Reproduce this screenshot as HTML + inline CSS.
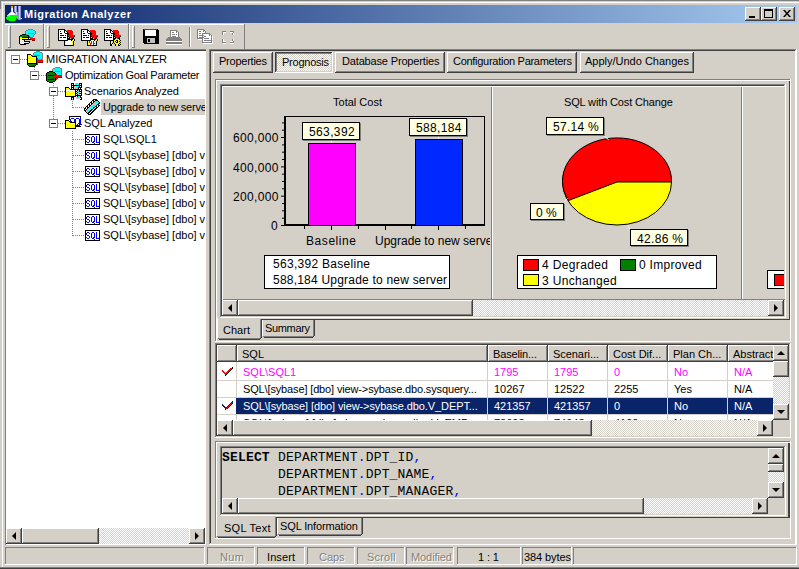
<!DOCTYPE html><html><head><meta charset="utf-8"><style>
*{box-sizing:border-box;margin:0;padding:0}
html,body{width:799px;height:569px;overflow:hidden;background:#d4d0c8;font-family:"Liberation Sans",sans-serif;font-size:11px;color:#000;position:relative}
.a{position:absolute}
.raised{box-shadow:inset -1px -1px #404040,inset 1px 1px #fff,inset -2px -2px #808080,inset 2px 2px #d4d0c8;background:#d4d0c8}
.sunk{box-shadow:inset -1px -1px #fff,inset 1px 1px #808080,inset -2px -2px #d4d0c8,inset 2px 2px #404040}
.tsunk{box-shadow:inset -1px -1px #fff,inset 1px 1px #808080}
.traised{box-shadow:inset -1px -1px #808080,inset 1px 1px #fff}
.etch{box-shadow:inset 1px 1px #808080,inset 2px 2px #fff,inset -1px -1px #fff,inset -2px -2px #808080}
.dither{background-color:#fff;background-image:linear-gradient(45deg,#d4d0c8 25%,transparent 25%,transparent 75%,#d4d0c8 75%),linear-gradient(45deg,#d4d0c8 25%,transparent 25%,transparent 75%,#d4d0c8 75%);background-size:2px 2px;background-position:0 0,1px 1px}
.t{position:absolute;white-space:nowrap;line-height:13px}
.t12{position:absolute;white-space:nowrap;line-height:14px;font-size:12px}
.dis{color:#808080;text-shadow:1px 1px #fff}
</style></head><body><div class="a " style="left:0px;top:0px;width:799px;height:1px;background:#808080"></div>
<div class="a " style="left:0px;top:0px;width:1px;height:9px;background:#808080"></div>
<div class="a " style="left:2px;top:2px;width:797px;height:1px;background:#fff"></div>
<div class="a " style="left:2px;top:2px;width:1px;height:565px;background:#fff"></div>
<div class="a " style="left:0px;top:567px;width:799px;height:1px;background:#808080"></div>
<div class="a " style="left:0px;top:568px;width:799px;height:1px;background:#404040"></div>
<div class="a " style="left:5px;top:5px;width:792px;height:18px;background:linear-gradient(to right,#0a246a,#a6caf0)"></div>
<svg class="a" style="left:6px;top:6px" width="16" height="16" shape-rendering="crispEdges"><rect x="5" y="0" width="2" height="1" fill="#ff9900"/><rect x="8" y="0" width="1" height="1" fill="#8890d0"/><rect x="9" y="0" width="1" height="1" fill="#c8d0f8"/><rect x="10" y="0" width="1" height="1" fill="#8890d0"/><rect x="12" y="0" width="1" height="1" fill="#8890d0"/><rect x="13" y="0" width="1" height="1" fill="#c8d0f8"/><rect x="14" y="0" width="1" height="1" fill="#8890d0"/><rect x="5" y="1" width="2" height="1" fill="#ff9900"/><rect x="8" y="1" width="1" height="1" fill="#8890d0"/><rect x="9" y="1" width="1" height="1" fill="#c8d0f8"/><rect x="10" y="1" width="1" height="1" fill="#8890d0"/><rect x="12" y="1" width="1" height="1" fill="#8890d0"/><rect x="13" y="1" width="1" height="1" fill="#c8d0f8"/><rect x="14" y="1" width="1" height="1" fill="#8890d0"/><rect x="5" y="2" width="1" height="1" fill="#c8d0f8"/><rect x="6" y="2" width="1" height="1" fill="#ffffff"/><rect x="8" y="2" width="1" height="1" fill="#8890d0"/><rect x="9" y="2" width="1" height="1" fill="#c8d0f8"/><rect x="10" y="2" width="1" height="1" fill="#8890d0"/><rect x="12" y="2" width="1" height="1" fill="#8890d0"/><rect x="13" y="2" width="1" height="1" fill="#c8d0f8"/><rect x="14" y="2" width="1" height="1" fill="#8890d0"/><rect x="5" y="3" width="1" height="1" fill="#c8d0f8"/><rect x="6" y="3" width="1" height="1" fill="#ffffff"/><rect x="8" y="3" width="1" height="1" fill="#8890d0"/><rect x="9" y="3" width="1" height="1" fill="#c8d0f8"/><rect x="10" y="3" width="1" height="1" fill="#8890d0"/><rect x="12" y="3" width="1" height="1" fill="#8890d0"/><rect x="13" y="3" width="1" height="1" fill="#c8d0f8"/><rect x="14" y="3" width="1" height="1" fill="#8890d0"/><rect x="5" y="4" width="1" height="1" fill="#c8d0f8"/><rect x="6" y="4" width="1" height="1" fill="#ffffff"/><rect x="8" y="4" width="1" height="1" fill="#8890d0"/><rect x="9" y="4" width="1" height="1" fill="#c8d0f8"/><rect x="10" y="4" width="1" height="1" fill="#8890d0"/><rect x="12" y="4" width="1" height="1" fill="#8890d0"/><rect x="13" y="4" width="1" height="1" fill="#c8d0f8"/><rect x="14" y="4" width="1" height="1" fill="#8890d0"/><rect x="5" y="5" width="1" height="1" fill="#c8d0f8"/><rect x="6" y="5" width="1" height="1" fill="#ffffff"/><rect x="8" y="5" width="1" height="1" fill="#8890d0"/><rect x="9" y="5" width="1" height="1" fill="#c8d0f8"/><rect x="10" y="5" width="1" height="1" fill="#8890d0"/><rect x="12" y="5" width="1" height="1" fill="#8890d0"/><rect x="13" y="5" width="1" height="1" fill="#c8d0f8"/><rect x="14" y="5" width="1" height="1" fill="#8890d0"/><rect x="4" y="6" width="1" height="1" fill="#c8d0f8"/><rect x="5" y="6" width="2" height="1" fill="#ffffff"/><rect x="7" y="6" width="1" height="1" fill="#c8d0f8"/><rect x="9" y="6" width="1" height="1" fill="#8890d0"/><rect x="10" y="6" width="1" height="1" fill="#c8d0f8"/><rect x="11" y="6" width="2" height="1" fill="#8890d0"/><rect x="13" y="6" width="1" height="1" fill="#c8d0f8"/><rect x="14" y="6" width="1" height="1" fill="#8890d0"/><rect x="3" y="7" width="1" height="1" fill="#c8d0f8"/><rect x="4" y="7" width="4" height="1" fill="#ffffff"/><rect x="8" y="7" width="1" height="1" fill="#c8d0f8"/><rect x="9" y="7" width="1" height="1" fill="#8890d0"/><rect x="10" y="7" width="1" height="1" fill="#c8d0f8"/><rect x="11" y="7" width="2" height="1" fill="#8890d0"/><rect x="13" y="7" width="1" height="1" fill="#c8d0f8"/><rect x="14" y="7" width="1" height="1" fill="#8890d0"/><rect x="2" y="8" width="1" height="1" fill="#c8d0f8"/><rect x="3" y="8" width="6" height="1" fill="#ffffff"/><rect x="9" y="8" width="2" height="1" fill="#c8d0f8"/><rect x="11" y="8" width="2" height="1" fill="#8890d0"/><rect x="13" y="8" width="1" height="1" fill="#c8d0f8"/><rect x="14" y="8" width="1" height="1" fill="#8890d0"/><rect x="1" y="9" width="1" height="1" fill="#c8d0f8"/><rect x="2" y="9" width="2" height="1" fill="#80ff80"/><rect x="4" y="9" width="6" height="1" fill="#00ff00"/><rect x="10" y="9" width="3" height="1" fill="#8890d0"/><rect x="13" y="9" width="1" height="1" fill="#c8d0f8"/><rect x="14" y="9" width="1" height="1" fill="#8890d0"/><rect x="1" y="10" width="2" height="1" fill="#00ff00"/><rect x="3" y="10" width="1" height="1" fill="#80ff80"/><rect x="4" y="10" width="7" height="1" fill="#00ff00"/><rect x="11" y="10" width="2" height="1" fill="#8890d0"/><rect x="13" y="10" width="1" height="1" fill="#c8d0f8"/><rect x="14" y="10" width="1" height="1" fill="#8890d0"/><rect x="0" y="11" width="11" height="1" fill="#00ff00"/><rect x="11" y="11" width="2" height="1" fill="#8890d0"/><rect x="13" y="11" width="1" height="1" fill="#c8d0f8"/><rect x="14" y="11" width="1" height="1" fill="#8890d0"/><rect x="0" y="12" width="10" height="1" fill="#00ff00"/><rect x="10" y="12" width="1" height="1" fill="#008000"/><rect x="11" y="12" width="2" height="1" fill="#8890d0"/><rect x="13" y="12" width="1" height="1" fill="#c8d0f8"/><rect x="14" y="12" width="1" height="1" fill="#8890d0"/><rect x="15" y="12" width="1" height="1" fill="#ffffff"/><rect x="1" y="13" width="9" height="1" fill="#00ff00"/><rect x="10" y="13" width="1" height="1" fill="#008000"/><rect x="12" y="13" width="3" height="1" fill="#8890d0"/><rect x="2" y="14" width="1" height="1" fill="#008000"/><rect x="3" y="14" width="6" height="1" fill="#00ff00"/><rect x="9" y="14" width="1" height="1" fill="#008000"/><rect x="4" y="15" width="4" height="1" fill="#008000"/></svg>
<div class="t" style="left:24px;top:8px;color:#fff;letter-spacing:0.528px;font-weight:bold">Migration Analyzer</div>
<div class="a raised" style="left:745px;top:7px;width:16px;height:14px;"></div>
<div class="a " style="left:749px;top:16px;width:6px;height:2px;background:#000"></div>
<div class="a raised" style="left:761px;top:7px;width:16px;height:14px;"></div>
<div class="a " style="left:764px;top:9px;width:9px;height:9px;border:1px solid #000;border-top-width:2px"></div>
<div class="a raised" style="left:779px;top:7px;width:16px;height:14px;"></div>
<svg class="a" style="left:783px;top:10px" width="8" height="7"><path d="M0 0h2l2 2.5 2-2.5h2l-3 3.5 3 3.5h-2l-2-2.5-2 2.5h-2l3-3.5z" fill="#000"/></svg>
<div class="a " style="left:5px;top:24px;width:239px;height:1px;background:#fff"></div>
<div class="a " style="left:43px;top:24px;width:1px;height:25px;background:#808080"></div>
<div class="a " style="left:44px;top:24px;width:1px;height:25px;background:#fff"></div>
<div class="a " style="left:128px;top:24px;width:1px;height:25px;background:#808080"></div>
<div class="a " style="left:129px;top:24px;width:1px;height:25px;background:#fff"></div>
<div class="a " style="left:244px;top:24px;width:1px;height:25px;background:#808080"></div>
<div class="a traised" style="left:8px;top:26px;width:3px;height:22px;"></div>
<div class="a traised" style="left:47px;top:26px;width:3px;height:22px;"></div>
<div class="a traised" style="left:132px;top:26px;width:3px;height:22px;"></div>
<div class="a " style="left:189px;top:27px;width:1px;height:20px;background:#808080"></div>
<div class="a " style="left:190px;top:27px;width:1px;height:20px;background:#fff"></div>
<svg class="a" style="left:17px;top:27px" width="20" height="20" shape-rendering="crispEdges"><rect x="11" y="2" width="5" height="1" fill="#808080"/><rect x="9" y="3" width="2" height="1" fill="#808080"/><rect x="11" y="3" width="5" height="1" fill="#00ffff"/><rect x="16" y="3" width="2" height="1" fill="#808080"/><rect x="8" y="4" width="1" height="1" fill="#808080"/><rect x="9" y="4" width="9" height="1" fill="#00ffff"/><rect x="18" y="4" width="1" height="1" fill="#808080"/><rect x="8" y="5" width="1" height="1" fill="#808080"/><rect x="9" y="5" width="9" height="1" fill="#00ffff"/><rect x="18" y="5" width="1" height="1" fill="#808080"/><rect x="8" y="6" width="1" height="1" fill="#808080"/><rect x="9" y="6" width="2" height="1" fill="#00ffff"/><rect x="11" y="6" width="6" height="1" fill="#808080"/><rect x="17" y="6" width="1" height="1" fill="#00ffff"/><rect x="18" y="6" width="1" height="1" fill="#808080"/><rect x="5" y="7" width="4" height="1" fill="#000000"/><rect x="9" y="7" width="1" height="1" fill="#808080"/><rect x="10" y="7" width="7" height="1" fill="#00ffff"/><rect x="17" y="7" width="1" height="1" fill="#808080"/><rect x="3" y="8" width="2" height="1" fill="#000000"/><rect x="5" y="8" width="5" height="1" fill="#008000"/><rect x="10" y="8" width="2" height="1" fill="#000000"/><rect x="12" y="8" width="4" height="1" fill="#00ffff"/><rect x="16" y="8" width="1" height="1" fill="#808080"/><rect x="2" y="9" width="1" height="1" fill="#000000"/><rect x="3" y="9" width="8" height="1" fill="#008000"/><rect x="11" y="9" width="1" height="1" fill="#000000"/><rect x="12" y="9" width="1" height="1" fill="#ff0000"/><rect x="13" y="9" width="3" height="1" fill="#00ffff"/><rect x="16" y="9" width="1" height="1" fill="#808080"/><rect x="2" y="10" width="1" height="1" fill="#000000"/><rect x="3" y="10" width="2" height="1" fill="#ffff00"/><rect x="5" y="10" width="7" height="1" fill="#000000"/><rect x="12" y="10" width="2" height="1" fill="#ff0000"/><rect x="14" y="10" width="2" height="1" fill="#808080"/><rect x="2" y="11" width="1" height="1" fill="#000000"/><rect x="3" y="11" width="1" height="1" fill="#ffff00"/><rect x="4" y="11" width="1" height="1" fill="#ffffff"/><rect x="5" y="11" width="1" height="1" fill="#ffff00"/><rect x="6" y="11" width="1" height="1" fill="#ffffff"/><rect x="7" y="11" width="1" height="1" fill="#ffff00"/><rect x="8" y="11" width="1" height="1" fill="#ffffff"/><rect x="9" y="11" width="1" height="1" fill="#ffff00"/><rect x="10" y="11" width="1" height="1" fill="#ffffff"/><rect x="11" y="11" width="1" height="1" fill="#000000"/><rect x="12" y="11" width="1" height="1" fill="#ffffff"/><rect x="13" y="11" width="5" height="1" fill="#ff0000"/><rect x="2" y="12" width="1" height="1" fill="#000000"/><rect x="3" y="12" width="2" height="1" fill="#ffff00"/><rect x="5" y="12" width="9" height="1" fill="#000000"/><rect x="14" y="12" width="4" height="1" fill="#ff0000"/><rect x="2" y="13" width="1" height="1" fill="#000000"/><rect x="3" y="13" width="1" height="1" fill="#ffffff"/><rect x="4" y="13" width="1" height="1" fill="#ffff00"/><rect x="5" y="13" width="1" height="1" fill="#ffffff"/><rect x="6" y="13" width="1" height="1" fill="#ffff00"/><rect x="7" y="13" width="1" height="1" fill="#000000"/><rect x="15" y="13" width="3" height="1" fill="#800000"/><rect x="2" y="14" width="1" height="1" fill="#000000"/><rect x="3" y="14" width="1" height="1" fill="#ffff00"/><rect x="4" y="14" width="1" height="1" fill="#ffffff"/><rect x="5" y="14" width="1" height="1" fill="#ffff00"/><rect x="6" y="14" width="1" height="1" fill="#ffffff"/><rect x="7" y="14" width="6" height="1" fill="#000000"/><rect x="2" y="15" width="1" height="1" fill="#000000"/><rect x="3" y="15" width="1" height="1" fill="#ffffff"/><rect x="4" y="15" width="1" height="1" fill="#ffff00"/><rect x="5" y="15" width="1" height="1" fill="#ffffff"/><rect x="6" y="15" width="1" height="1" fill="#ffff00"/><rect x="7" y="15" width="1" height="1" fill="#ffffff"/><rect x="8" y="15" width="1" height="1" fill="#ffff00"/><rect x="9" y="15" width="1" height="1" fill="#ffffff"/><rect x="10" y="15" width="1" height="1" fill="#ffff00"/><rect x="11" y="15" width="1" height="1" fill="#ffffff"/><rect x="12" y="15" width="1" height="1" fill="#000000"/><rect x="2" y="16" width="1" height="1" fill="#000000"/><rect x="3" y="16" width="1" height="1" fill="#ffff00"/><rect x="4" y="16" width="1" height="1" fill="#ffffff"/><rect x="5" y="16" width="1" height="1" fill="#ffff00"/><rect x="6" y="16" width="1" height="1" fill="#ffffff"/><rect x="7" y="16" width="5" height="1" fill="#000000"/><rect x="3" y="17" width="6" height="1" fill="#000000"/></svg>
<svg class="a" style="left:56px;top:27px" width="20" height="20" shape-rendering="crispEdges"><rect x="2" y="2" width="7" height="1" fill="#000000"/><rect x="2" y="3" width="1" height="1" fill="#000000"/><rect x="3" y="3" width="5" height="1" fill="#ffffff"/><rect x="8" y="3" width="2" height="1" fill="#000000"/><rect x="11" y="3" width="5" height="1" fill="#ff0000"/><rect x="2" y="4" width="1" height="1" fill="#000000"/><rect x="3" y="4" width="1" height="1" fill="#ffffff"/><rect x="4" y="4" width="1" height="1" fill="#000000"/><rect x="5" y="4" width="3" height="1" fill="#ffffff"/><rect x="8" y="4" width="1" height="1" fill="#000000"/><rect x="9" y="4" width="1" height="1" fill="#ffffff"/><rect x="10" y="4" width="1" height="1" fill="#000000"/><rect x="11" y="4" width="6" height="1" fill="#ff0000"/><rect x="2" y="5" width="1" height="1" fill="#000000"/><rect x="3" y="5" width="5" height="1" fill="#ffffff"/><rect x="8" y="5" width="1" height="1" fill="#000000"/><rect x="9" y="5" width="2" height="1" fill="#ffffff"/><rect x="11" y="5" width="1" height="1" fill="#000000"/><rect x="12" y="5" width="5" height="1" fill="#ff0000"/><rect x="2" y="6" width="1" height="1" fill="#000000"/><rect x="3" y="6" width="1" height="1" fill="#ffffff"/><rect x="4" y="6" width="2" height="1" fill="#000000"/><rect x="6" y="6" width="3" height="1" fill="#ffffff"/><rect x="9" y="6" width="4" height="1" fill="#000000"/><rect x="13" y="6" width="4" height="1" fill="#ff0000"/><rect x="2" y="7" width="1" height="1" fill="#000000"/><rect x="3" y="7" width="8" height="1" fill="#ffffff"/><rect x="11" y="7" width="2" height="1" fill="#000000"/><rect x="13" y="7" width="4" height="1" fill="#ff0000"/><rect x="2" y="8" width="1" height="1" fill="#000000"/><rect x="3" y="8" width="1" height="1" fill="#ffffff"/><rect x="4" y="8" width="4" height="1" fill="#000000"/><rect x="8" y="8" width="1" height="1" fill="#ffffff"/><rect x="9" y="8" width="1" height="1" fill="#000000"/><rect x="10" y="8" width="1" height="1" fill="#ffffff"/><rect x="11" y="8" width="1" height="1" fill="#000000"/><rect x="12" y="8" width="7" height="1" fill="#ff0000"/><rect x="2" y="9" width="1" height="1" fill="#000000"/><rect x="3" y="9" width="8" height="1" fill="#ffffff"/><rect x="11" y="9" width="2" height="1" fill="#000000"/><rect x="13" y="9" width="5" height="1" fill="#ff0000"/><rect x="18" y="9" width="1" height="1" fill="#000000"/><rect x="2" y="10" width="1" height="1" fill="#000000"/><rect x="3" y="10" width="1" height="1" fill="#ffffff"/><rect x="4" y="10" width="2" height="1" fill="#000000"/><rect x="6" y="10" width="1" height="1" fill="#ffffff"/><rect x="7" y="10" width="3" height="1" fill="#000000"/><rect x="10" y="10" width="1" height="1" fill="#ffffff"/><rect x="11" y="10" width="1" height="1" fill="#000000"/><rect x="13" y="10" width="1" height="1" fill="#000000"/><rect x="14" y="10" width="3" height="1" fill="#ff0000"/><rect x="17" y="10" width="1" height="1" fill="#000000"/><rect x="2" y="11" width="1" height="1" fill="#000000"/><rect x="3" y="11" width="8" height="1" fill="#ffffff"/><rect x="11" y="11" width="3" height="1" fill="#000000"/><rect x="15" y="11" width="1" height="1" fill="#ff0000"/><rect x="16" y="11" width="2" height="1" fill="#000000"/><rect x="2" y="12" width="1" height="1" fill="#000000"/><rect x="3" y="12" width="8" height="1" fill="#ffffff"/><rect x="11" y="12" width="6" height="1" fill="#000000"/><rect x="17" y="12" width="1" height="1" fill="#ffff00"/><rect x="18" y="12" width="1" height="1" fill="#000000"/><rect x="2" y="13" width="10" height="1" fill="#000000"/><rect x="12" y="13" width="3" height="1" fill="#ffffff"/><rect x="15" y="13" width="1" height="1" fill="#000000"/><rect x="16" y="13" width="2" height="1" fill="#ffff00"/><rect x="18" y="13" width="1" height="1" fill="#000000"/><rect x="8" y="14" width="1" height="1" fill="#000000"/><rect x="9" y="14" width="1" height="1" fill="#ffff00"/><rect x="10" y="14" width="6" height="1" fill="#ffffff"/><rect x="16" y="14" width="1" height="1" fill="#ffff00"/><rect x="17" y="14" width="1" height="1" fill="#000000"/><rect x="8" y="15" width="1" height="1" fill="#000000"/><rect x="9" y="15" width="1" height="1" fill="#ffff00"/><rect x="10" y="15" width="6" height="1" fill="#ffffff"/><rect x="16" y="15" width="1" height="1" fill="#ffff00"/><rect x="17" y="15" width="1" height="1" fill="#000000"/><rect x="8" y="16" width="1" height="1" fill="#000000"/><rect x="9" y="16" width="1" height="1" fill="#ffff00"/><rect x="10" y="16" width="6" height="1" fill="#ffffff"/><rect x="16" y="16" width="1" height="1" fill="#ffff00"/><rect x="17" y="16" width="1" height="1" fill="#000000"/><rect x="8" y="17" width="1" height="1" fill="#000000"/><rect x="9" y="17" width="1" height="1" fill="#ffff00"/><rect x="10" y="17" width="6" height="1" fill="#ffffff"/><rect x="16" y="17" width="1" height="1" fill="#ffff00"/><rect x="17" y="17" width="1" height="1" fill="#000000"/><rect x="8" y="18" width="10" height="1" fill="#000000"/></svg>
<svg class="a" style="left:79px;top:27px" width="20" height="20" shape-rendering="crispEdges"><rect x="2" y="2" width="7" height="1" fill="#000000"/><rect x="2" y="3" width="1" height="1" fill="#000000"/><rect x="3" y="3" width="5" height="1" fill="#ffffff"/><rect x="8" y="3" width="2" height="1" fill="#000000"/><rect x="11" y="3" width="5" height="1" fill="#ff0000"/><rect x="2" y="4" width="1" height="1" fill="#000000"/><rect x="3" y="4" width="1" height="1" fill="#ffffff"/><rect x="4" y="4" width="1" height="1" fill="#000000"/><rect x="5" y="4" width="3" height="1" fill="#ffffff"/><rect x="8" y="4" width="1" height="1" fill="#000000"/><rect x="9" y="4" width="1" height="1" fill="#ffffff"/><rect x="10" y="4" width="1" height="1" fill="#000000"/><rect x="11" y="4" width="6" height="1" fill="#ff0000"/><rect x="2" y="5" width="1" height="1" fill="#000000"/><rect x="3" y="5" width="5" height="1" fill="#ffffff"/><rect x="8" y="5" width="1" height="1" fill="#000000"/><rect x="9" y="5" width="2" height="1" fill="#ffffff"/><rect x="11" y="5" width="1" height="1" fill="#000000"/><rect x="12" y="5" width="5" height="1" fill="#ff0000"/><rect x="2" y="6" width="1" height="1" fill="#000000"/><rect x="3" y="6" width="1" height="1" fill="#ffffff"/><rect x="4" y="6" width="2" height="1" fill="#000000"/><rect x="6" y="6" width="3" height="1" fill="#ffffff"/><rect x="9" y="6" width="4" height="1" fill="#000000"/><rect x="13" y="6" width="4" height="1" fill="#ff0000"/><rect x="2" y="7" width="1" height="1" fill="#000000"/><rect x="3" y="7" width="8" height="1" fill="#ffffff"/><rect x="11" y="7" width="2" height="1" fill="#000000"/><rect x="13" y="7" width="4" height="1" fill="#ff0000"/><rect x="2" y="8" width="1" height="1" fill="#000000"/><rect x="3" y="8" width="1" height="1" fill="#ffffff"/><rect x="4" y="8" width="4" height="1" fill="#000000"/><rect x="8" y="8" width="1" height="1" fill="#ffffff"/><rect x="9" y="8" width="1" height="1" fill="#000000"/><rect x="10" y="8" width="1" height="1" fill="#ffffff"/><rect x="11" y="8" width="1" height="1" fill="#000000"/><rect x="12" y="8" width="7" height="1" fill="#ff0000"/><rect x="2" y="9" width="1" height="1" fill="#000000"/><rect x="3" y="9" width="8" height="1" fill="#ffffff"/><rect x="11" y="9" width="2" height="1" fill="#000000"/><rect x="13" y="9" width="5" height="1" fill="#ff0000"/><rect x="18" y="9" width="1" height="1" fill="#000000"/><rect x="2" y="10" width="1" height="1" fill="#000000"/><rect x="3" y="10" width="1" height="1" fill="#ffffff"/><rect x="4" y="10" width="2" height="1" fill="#000000"/><rect x="6" y="10" width="1" height="1" fill="#ffffff"/><rect x="7" y="10" width="3" height="1" fill="#000000"/><rect x="10" y="10" width="1" height="1" fill="#ffffff"/><rect x="11" y="10" width="1" height="1" fill="#000000"/><rect x="13" y="10" width="1" height="1" fill="#000000"/><rect x="14" y="10" width="3" height="1" fill="#ff0000"/><rect x="17" y="10" width="1" height="1" fill="#000000"/><rect x="2" y="11" width="1" height="1" fill="#000000"/><rect x="3" y="11" width="8" height="1" fill="#ffffff"/><rect x="11" y="11" width="3" height="1" fill="#000000"/><rect x="15" y="11" width="1" height="1" fill="#ff0000"/><rect x="16" y="11" width="2" height="1" fill="#000000"/><rect x="2" y="12" width="1" height="1" fill="#000000"/><rect x="3" y="12" width="8" height="1" fill="#ffffff"/><rect x="11" y="12" width="6" height="1" fill="#000000"/><rect x="17" y="12" width="1" height="1" fill="#ffff00"/><rect x="18" y="12" width="1" height="1" fill="#000000"/><rect x="2" y="13" width="10" height="1" fill="#000000"/><rect x="12" y="13" width="3" height="1" fill="#ffffff"/><rect x="15" y="13" width="1" height="1" fill="#000000"/><rect x="16" y="13" width="2" height="1" fill="#ffff00"/><rect x="18" y="13" width="1" height="1" fill="#000000"/><rect x="8" y="14" width="1" height="1" fill="#000000"/><rect x="9" y="14" width="1" height="1" fill="#ffff00"/><rect x="10" y="14" width="1" height="1" fill="#ff0000"/><rect x="11" y="14" width="1" height="1" fill="#ffffff"/><rect x="12" y="14" width="1" height="1" fill="#ff0000"/><rect x="13" y="14" width="1" height="1" fill="#ffffff"/><rect x="14" y="14" width="1" height="1" fill="#ff0000"/><rect x="15" y="14" width="1" height="1" fill="#ffffff"/><rect x="16" y="14" width="1" height="1" fill="#ffff00"/><rect x="17" y="14" width="1" height="1" fill="#000000"/><rect x="8" y="15" width="1" height="1" fill="#000000"/><rect x="9" y="15" width="1" height="1" fill="#ffff00"/><rect x="10" y="15" width="1" height="1" fill="#ff0000"/><rect x="11" y="15" width="1" height="1" fill="#ffffff"/><rect x="12" y="15" width="1" height="1" fill="#ff0000"/><rect x="13" y="15" width="1" height="1" fill="#ffffff"/><rect x="14" y="15" width="1" height="1" fill="#ff0000"/><rect x="15" y="15" width="1" height="1" fill="#ffffff"/><rect x="16" y="15" width="1" height="1" fill="#ffff00"/><rect x="17" y="15" width="1" height="1" fill="#000000"/><rect x="8" y="16" width="1" height="1" fill="#000000"/><rect x="9" y="16" width="1" height="1" fill="#ffff00"/><rect x="10" y="16" width="1" height="1" fill="#ffffff"/><rect x="11" y="16" width="2" height="1" fill="#ff0000"/><rect x="13" y="16" width="1" height="1" fill="#ffffff"/><rect x="14" y="16" width="2" height="1" fill="#ff0000"/><rect x="16" y="16" width="1" height="1" fill="#ffff00"/><rect x="17" y="16" width="1" height="1" fill="#000000"/><rect x="8" y="17" width="1" height="1" fill="#000000"/><rect x="9" y="17" width="1" height="1" fill="#ffff00"/><rect x="10" y="17" width="1" height="1" fill="#ffffff"/><rect x="11" y="17" width="1" height="1" fill="#ff0000"/><rect x="12" y="17" width="2" height="1" fill="#ffffff"/><rect x="14" y="17" width="1" height="1" fill="#ff0000"/><rect x="15" y="17" width="1" height="1" fill="#ffffff"/><rect x="16" y="17" width="1" height="1" fill="#ffff00"/><rect x="17" y="17" width="1" height="1" fill="#000000"/><rect x="8" y="18" width="10" height="1" fill="#000000"/></svg>
<svg class="a" style="left:102px;top:27px" width="20" height="20" shape-rendering="crispEdges"><rect x="2" y="2" width="7" height="1" fill="#000000"/><rect x="2" y="3" width="1" height="1" fill="#000000"/><rect x="3" y="3" width="5" height="1" fill="#ffffff"/><rect x="8" y="3" width="2" height="1" fill="#000000"/><rect x="11" y="3" width="5" height="1" fill="#ff0000"/><rect x="2" y="4" width="1" height="1" fill="#000000"/><rect x="3" y="4" width="1" height="1" fill="#ffffff"/><rect x="4" y="4" width="1" height="1" fill="#000000"/><rect x="5" y="4" width="3" height="1" fill="#ffffff"/><rect x="8" y="4" width="1" height="1" fill="#000000"/><rect x="9" y="4" width="1" height="1" fill="#ffffff"/><rect x="10" y="4" width="1" height="1" fill="#000000"/><rect x="11" y="4" width="6" height="1" fill="#ff0000"/><rect x="2" y="5" width="1" height="1" fill="#000000"/><rect x="3" y="5" width="5" height="1" fill="#ffffff"/><rect x="8" y="5" width="1" height="1" fill="#000000"/><rect x="9" y="5" width="2" height="1" fill="#ffffff"/><rect x="11" y="5" width="1" height="1" fill="#000000"/><rect x="12" y="5" width="5" height="1" fill="#ff0000"/><rect x="2" y="6" width="1" height="1" fill="#000000"/><rect x="3" y="6" width="1" height="1" fill="#ffffff"/><rect x="4" y="6" width="2" height="1" fill="#000000"/><rect x="6" y="6" width="3" height="1" fill="#ffffff"/><rect x="9" y="6" width="4" height="1" fill="#000000"/><rect x="13" y="6" width="4" height="1" fill="#ff0000"/><rect x="2" y="7" width="1" height="1" fill="#000000"/><rect x="3" y="7" width="8" height="1" fill="#ffffff"/><rect x="11" y="7" width="2" height="1" fill="#000000"/><rect x="13" y="7" width="4" height="1" fill="#ff0000"/><rect x="2" y="8" width="1" height="1" fill="#000000"/><rect x="3" y="8" width="1" height="1" fill="#ffffff"/><rect x="4" y="8" width="4" height="1" fill="#000000"/><rect x="8" y="8" width="1" height="1" fill="#ffffff"/><rect x="9" y="8" width="1" height="1" fill="#000000"/><rect x="10" y="8" width="1" height="1" fill="#ffffff"/><rect x="11" y="8" width="1" height="1" fill="#000000"/><rect x="12" y="8" width="7" height="1" fill="#ff0000"/><rect x="2" y="9" width="1" height="1" fill="#000000"/><rect x="3" y="9" width="8" height="1" fill="#ffffff"/><rect x="11" y="9" width="2" height="1" fill="#000000"/><rect x="13" y="9" width="5" height="1" fill="#ff0000"/><rect x="18" y="9" width="1" height="1" fill="#000000"/><rect x="2" y="10" width="1" height="1" fill="#000000"/><rect x="3" y="10" width="1" height="1" fill="#ffffff"/><rect x="4" y="10" width="2" height="1" fill="#000000"/><rect x="6" y="10" width="1" height="1" fill="#ffffff"/><rect x="7" y="10" width="3" height="1" fill="#000000"/><rect x="10" y="10" width="1" height="1" fill="#ffffff"/><rect x="11" y="10" width="1" height="1" fill="#000000"/><rect x="13" y="10" width="1" height="1" fill="#000000"/><rect x="14" y="10" width="3" height="1" fill="#ff0000"/><rect x="17" y="10" width="1" height="1" fill="#000000"/><rect x="2" y="11" width="1" height="1" fill="#000000"/><rect x="3" y="11" width="8" height="1" fill="#ffffff"/><rect x="11" y="11" width="3" height="1" fill="#000000"/><rect x="15" y="11" width="1" height="1" fill="#ff0000"/><rect x="16" y="11" width="2" height="1" fill="#000000"/><rect x="2" y="12" width="1" height="1" fill="#000000"/><rect x="3" y="12" width="8" height="1" fill="#ffffff"/><rect x="11" y="12" width="2" height="1" fill="#000000"/><rect x="13" y="12" width="4" height="1" fill="#ffff00"/><rect x="17" y="12" width="1" height="1" fill="#000000"/><rect x="2" y="13" width="10" height="1" fill="#000000"/><rect x="12" y="13" width="2" height="1" fill="#ffff00"/><rect x="14" y="13" width="2" height="1" fill="#000000"/><rect x="16" y="13" width="2" height="1" fill="#ffff00"/><rect x="18" y="13" width="1" height="1" fill="#000000"/><rect x="8" y="14" width="1" height="1" fill="#000000"/><rect x="11" y="14" width="1" height="1" fill="#000000"/><rect x="12" y="14" width="1" height="1" fill="#ffff00"/><rect x="13" y="14" width="1" height="1" fill="#000000"/><rect x="14" y="14" width="1" height="1" fill="#ffffff"/><rect x="15" y="14" width="1" height="1" fill="#000000"/><rect x="16" y="14" width="1" height="1" fill="#ffff00"/><rect x="17" y="14" width="1" height="1" fill="#000000"/><rect x="8" y="15" width="1" height="1" fill="#000000"/><rect x="9" y="15" width="1" height="1" fill="#ffffff"/><rect x="11" y="15" width="1" height="1" fill="#000000"/><rect x="12" y="15" width="2" height="1" fill="#ffff00"/><rect x="14" y="15" width="2" height="1" fill="#000000"/><rect x="16" y="15" width="2" height="1" fill="#ffff00"/><rect x="18" y="15" width="1" height="1" fill="#000000"/><rect x="8" y="16" width="1" height="1" fill="#000000"/><rect x="9" y="16" width="1" height="1" fill="#ffffff"/><rect x="10" y="16" width="1" height="1" fill="#000000"/><rect x="12" y="16" width="1" height="1" fill="#000000"/><rect x="13" y="16" width="4" height="1" fill="#ffff00"/><rect x="17" y="16" width="1" height="1" fill="#000000"/><rect x="8" y="17" width="2" height="1" fill="#000000"/><rect x="10" y="17" width="1" height="1" fill="#ffffff"/><rect x="13" y="17" width="1" height="1" fill="#000000"/><rect x="14" y="17" width="2" height="1" fill="#ffff00"/><rect x="16" y="17" width="1" height="1" fill="#000000"/><rect x="18" y="17" width="1" height="1" fill="#000000"/><rect x="8" y="18" width="2" height="1" fill="#000000"/><rect x="13" y="18" width="1" height="1" fill="#000000"/><rect x="14" y="18" width="2" height="1" fill="#ffff00"/><rect x="16" y="18" width="2" height="1" fill="#000000"/></svg>
<svg class="a" style="left:143px;top:29px" width="16" height="15" shape-rendering="crispEdges"><rect x="0" y="0" width="1" height="1" fill="#000000"/><rect x="1" y="0" width="13" height="1" fill="#ff0000"/><rect x="14" y="0" width="1" height="1" fill="#000000"/><rect x="0" y="1" width="2" height="1" fill="#000000"/><rect x="2" y="1" width="11" height="1" fill="#ffffff"/><rect x="13" y="1" width="3" height="1" fill="#000000"/><rect x="0" y="2" width="2" height="1" fill="#000000"/><rect x="2" y="2" width="11" height="1" fill="#ffffff"/><rect x="13" y="2" width="3" height="1" fill="#000000"/><rect x="0" y="3" width="2" height="1" fill="#000000"/><rect x="2" y="3" width="11" height="1" fill="#ffffff"/><rect x="13" y="3" width="3" height="1" fill="#000000"/><rect x="0" y="4" width="2" height="1" fill="#000000"/><rect x="2" y="4" width="11" height="1" fill="#ffffff"/><rect x="13" y="4" width="3" height="1" fill="#000000"/><rect x="0" y="5" width="2" height="1" fill="#000000"/><rect x="2" y="5" width="11" height="1" fill="#ffffff"/><rect x="13" y="5" width="3" height="1" fill="#000000"/><rect x="0" y="6" width="2" height="1" fill="#000000"/><rect x="2" y="6" width="11" height="1" fill="#ffffff"/><rect x="13" y="6" width="3" height="1" fill="#000000"/><rect x="0" y="7" width="16" height="1" fill="#000000"/><rect x="0" y="8" width="16" height="1" fill="#000000"/><rect x="0" y="9" width="4" height="1" fill="#000000"/><rect x="4" y="9" width="8" height="1" fill="#c0c0c0"/><rect x="12" y="9" width="4" height="1" fill="#000000"/><rect x="0" y="10" width="4" height="1" fill="#000000"/><rect x="4" y="10" width="1" height="1" fill="#c0c0c0"/><rect x="5" y="10" width="2" height="1" fill="#000000"/><rect x="7" y="10" width="5" height="1" fill="#c0c0c0"/><rect x="12" y="10" width="4" height="1" fill="#000000"/><rect x="0" y="11" width="4" height="1" fill="#000000"/><rect x="4" y="11" width="1" height="1" fill="#c0c0c0"/><rect x="5" y="11" width="2" height="1" fill="#000000"/><rect x="7" y="11" width="5" height="1" fill="#c0c0c0"/><rect x="12" y="11" width="4" height="1" fill="#000000"/><rect x="0" y="12" width="4" height="1" fill="#000000"/><rect x="4" y="12" width="1" height="1" fill="#c0c0c0"/><rect x="5" y="12" width="2" height="1" fill="#000000"/><rect x="7" y="12" width="5" height="1" fill="#c0c0c0"/><rect x="12" y="12" width="4" height="1" fill="#000000"/><rect x="0" y="13" width="4" height="1" fill="#000000"/><rect x="4" y="13" width="8" height="1" fill="#c0c0c0"/><rect x="12" y="13" width="4" height="1" fill="#000000"/><rect x="1" y="14" width="15" height="1" fill="#000000"/></svg>
<svg class="a" style="left:166px;top:30px" width="16" height="15" shape-rendering="crispEdges"><rect x="4" y="0" width="7" height="1" fill="#808080"/><rect x="4" y="1" width="1" height="1" fill="#808080"/><rect x="5" y="1" width="5" height="1" fill="#ffffff"/><rect x="10" y="1" width="2" height="1" fill="#808080"/><rect x="4" y="2" width="1" height="1" fill="#808080"/><rect x="5" y="2" width="1" height="1" fill="#ffffff"/><rect x="6" y="2" width="2" height="1" fill="#808080"/><rect x="8" y="2" width="2" height="1" fill="#ffffff"/><rect x="10" y="2" width="1" height="1" fill="#808080"/><rect x="11" y="2" width="1" height="1" fill="#ffffff"/><rect x="12" y="2" width="1" height="1" fill="#808080"/><rect x="4" y="3" width="1" height="1" fill="#808080"/><rect x="5" y="3" width="7" height="1" fill="#ffffff"/><rect x="12" y="3" width="1" height="1" fill="#808080"/><rect x="4" y="4" width="1" height="1" fill="#808080"/><rect x="5" y="4" width="1" height="1" fill="#ffffff"/><rect x="6" y="4" width="3" height="1" fill="#808080"/><rect x="9" y="4" width="1" height="1" fill="#ffffff"/><rect x="10" y="4" width="1" height="1" fill="#808080"/><rect x="11" y="4" width="1" height="1" fill="#ffffff"/><rect x="12" y="4" width="1" height="1" fill="#808080"/><rect x="4" y="5" width="1" height="1" fill="#808080"/><rect x="5" y="5" width="7" height="1" fill="#ffffff"/><rect x="12" y="5" width="1" height="1" fill="#808080"/><rect x="4" y="6" width="1" height="1" fill="#808080"/><rect x="5" y="6" width="1" height="1" fill="#ffffff"/><rect x="6" y="6" width="4" height="1" fill="#808080"/><rect x="10" y="6" width="2" height="1" fill="#ffffff"/><rect x="12" y="6" width="1" height="1" fill="#808080"/><rect x="2" y="7" width="12" height="1" fill="#808080"/><rect x="1" y="8" width="14" height="1" fill="#808080"/><rect x="0" y="9" width="16" height="1" fill="#808080"/><rect x="0" y="10" width="16" height="1" fill="#808080"/><rect x="0" y="11" width="16" height="1" fill="#ffffff"/><rect x="0" y="12" width="16" height="1" fill="#808080"/><rect x="0" y="13" width="16" height="1" fill="#808080"/><rect x="0" y="14" width="16" height="1" fill="#ffffff"/></svg>
<svg class="a" style="left:197px;top:29px" width="16" height="15" shape-rendering="crispEdges"><rect x="0" y="0" width="7" height="1" fill="#808080"/><rect x="0" y="1" width="1" height="1" fill="#808080"/><rect x="1" y="1" width="5" height="1" fill="#ffffff"/><rect x="6" y="1" width="2" height="1" fill="#808080"/><rect x="0" y="2" width="1" height="1" fill="#808080"/><rect x="1" y="2" width="1" height="1" fill="#ffffff"/><rect x="2" y="2" width="2" height="1" fill="#808080"/><rect x="4" y="2" width="2" height="1" fill="#ffffff"/><rect x="6" y="2" width="1" height="1" fill="#808080"/><rect x="7" y="2" width="1" height="1" fill="#ffffff"/><rect x="8" y="2" width="1" height="1" fill="#808080"/><rect x="0" y="3" width="1" height="1" fill="#808080"/><rect x="1" y="3" width="7" height="1" fill="#ffffff"/><rect x="8" y="3" width="1" height="1" fill="#808080"/><rect x="0" y="4" width="1" height="1" fill="#808080"/><rect x="1" y="4" width="1" height="1" fill="#ffffff"/><rect x="2" y="4" width="2" height="1" fill="#808080"/><rect x="4" y="4" width="1" height="1" fill="#ffffff"/><rect x="5" y="4" width="8" height="1" fill="#808080"/><rect x="0" y="5" width="1" height="1" fill="#808080"/><rect x="1" y="5" width="4" height="1" fill="#ffffff"/><rect x="5" y="5" width="1" height="1" fill="#808080"/><rect x="6" y="5" width="6" height="1" fill="#ffffff"/><rect x="12" y="5" width="2" height="1" fill="#808080"/><rect x="0" y="6" width="1" height="1" fill="#808080"/><rect x="1" y="6" width="1" height="1" fill="#ffffff"/><rect x="2" y="6" width="5" height="1" fill="#808080"/><rect x="7" y="6" width="5" height="1" fill="#ffffff"/><rect x="12" y="6" width="1" height="1" fill="#808080"/><rect x="13" y="6" width="1" height="1" fill="#ffffff"/><rect x="14" y="6" width="1" height="1" fill="#808080"/><rect x="0" y="7" width="1" height="1" fill="#808080"/><rect x="1" y="7" width="4" height="1" fill="#ffffff"/><rect x="5" y="7" width="1" height="1" fill="#808080"/><rect x="6" y="7" width="1" height="1" fill="#ffffff"/><rect x="7" y="7" width="2" height="1" fill="#808080"/><rect x="9" y="7" width="5" height="1" fill="#ffffff"/><rect x="14" y="7" width="1" height="1" fill="#808080"/><rect x="15" y="7" width="1" height="1" fill="#ffffff"/><rect x="0" y="8" width="1" height="1" fill="#808080"/><rect x="1" y="8" width="1" height="1" fill="#ffffff"/><rect x="2" y="8" width="5" height="1" fill="#808080"/><rect x="7" y="8" width="7" height="1" fill="#ffffff"/><rect x="14" y="8" width="1" height="1" fill="#808080"/><rect x="15" y="8" width="1" height="1" fill="#ffffff"/><rect x="0" y="9" width="6" height="1" fill="#808080"/><rect x="6" y="9" width="1" height="1" fill="#ffffff"/><rect x="7" y="9" width="5" height="1" fill="#808080"/><rect x="12" y="9" width="2" height="1" fill="#ffffff"/><rect x="14" y="9" width="1" height="1" fill="#808080"/><rect x="15" y="9" width="1" height="1" fill="#ffffff"/><rect x="1" y="10" width="4" height="1" fill="#ffffff"/><rect x="5" y="10" width="1" height="1" fill="#808080"/><rect x="6" y="10" width="8" height="1" fill="#ffffff"/><rect x="14" y="10" width="1" height="1" fill="#808080"/><rect x="15" y="10" width="1" height="1" fill="#ffffff"/><rect x="5" y="11" width="1" height="1" fill="#808080"/><rect x="6" y="11" width="1" height="1" fill="#ffffff"/><rect x="7" y="11" width="8" height="1" fill="#808080"/><rect x="5" y="12" width="1" height="1" fill="#808080"/><rect x="6" y="12" width="8" height="1" fill="#ffffff"/><rect x="14" y="12" width="1" height="1" fill="#808080"/><rect x="15" y="12" width="1" height="1" fill="#ffffff"/><rect x="5" y="13" width="10" height="1" fill="#808080"/><rect x="15" y="13" width="1" height="1" fill="#ffffff"/><rect x="6" y="14" width="10" height="1" fill="#ffffff"/></svg>
<svg class="a" style="left:222px;top:31px" width="13" height="13" shape-rendering="crispEdges"><rect x="0" y="0" width="4" height="1" fill="#808080"/><rect x="8" y="0" width="4" height="1" fill="#808080"/><rect x="0" y="1" width="1" height="1" fill="#808080"/><rect x="1" y="1" width="3" height="1" fill="#ffffff"/><rect x="8" y="1" width="3" height="1" fill="#ffffff"/><rect x="11" y="1" width="1" height="1" fill="#808080"/><rect x="0" y="2" width="1" height="1" fill="#808080"/><rect x="1" y="2" width="1" height="1" fill="#ffffff"/><rect x="10" y="2" width="1" height="1" fill="#808080"/><rect x="11" y="2" width="1" height="1" fill="#ffffff"/><rect x="0" y="3" width="1" height="1" fill="#808080"/><rect x="1" y="3" width="1" height="1" fill="#ffffff"/><rect x="10" y="3" width="1" height="1" fill="#808080"/><rect x="11" y="3" width="1" height="1" fill="#ffffff"/><rect x="0" y="8" width="1" height="1" fill="#808080"/><rect x="1" y="8" width="1" height="1" fill="#ffffff"/><rect x="10" y="8" width="1" height="1" fill="#808080"/><rect x="11" y="8" width="1" height="1" fill="#ffffff"/><rect x="0" y="9" width="1" height="1" fill="#808080"/><rect x="1" y="9" width="1" height="1" fill="#ffffff"/><rect x="10" y="9" width="1" height="1" fill="#808080"/><rect x="11" y="9" width="1" height="1" fill="#ffffff"/><rect x="0" y="10" width="1" height="1" fill="#808080"/><rect x="1" y="10" width="3" height="1" fill="#ffffff"/><rect x="8" y="10" width="3" height="1" fill="#ffffff"/><rect x="11" y="10" width="1" height="1" fill="#808080"/><rect x="0" y="11" width="4" height="1" fill="#808080"/><rect x="8" y="11" width="4" height="1" fill="#808080"/><rect x="1" y="12" width="3" height="1" fill="#ffffff"/><rect x="8" y="12" width="4" height="1" fill="#ffffff"/></svg>
<div class="a " style="left:5px;top:49px;width:201px;height:496px;background:#fff;box-shadow:inset 0 1px #808080,inset 0 2px #404040,inset -1px -1px #fff"></div>
<div class="a " style="left:5px;top:49px;width:1px;height:496px;background:#808080"></div>
<div class="a " style="left:101px;top:99px;width:104px;height:16px;background:#d4d0c8"></div>
<div class="a" style="left:7px;top:51px;width:198px;height:476px;overflow:hidden">
<svg class="a" style="left:4px;top:4px" width="9" height="9" shape-rendering="crispEdges"><rect x="0" y="0" width="9" height="9" fill="#808080"/><rect x="1" y="1" width="7" height="7" fill="#fff"/><rect x="2" y="4" width="5" height="1" fill="#000"/></svg>
<svg class="a" style="left:13px;top:8px" width="7" height="1" shape-rendering="crispEdges"><rect x="0" y="0" width="1" height="1" fill="#808080"/><rect x="2" y="0" width="1" height="1" fill="#808080"/><rect x="4" y="0" width="1" height="1" fill="#808080"/><rect x="6" y="0" width="1" height="1" fill="#808080"/></svg>
<svg class="a" style="left:19px;top:-1px" width="18" height="18" shape-rendering="crispEdges"><rect x="10" y="1" width="4" height="1" fill="#808080"/><rect x="8" y="2" width="2" height="1" fill="#808080"/><rect x="10" y="2" width="4" height="1" fill="#00ffff"/><rect x="14" y="2" width="2" height="1" fill="#808080"/><rect x="7" y="3" width="1" height="1" fill="#808080"/><rect x="8" y="3" width="8" height="1" fill="#00ffff"/><rect x="16" y="3" width="1" height="1" fill="#808080"/><rect x="1" y="4" width="4" height="1" fill="#000000"/><rect x="7" y="4" width="1" height="1" fill="#808080"/><rect x="8" y="4" width="8" height="1" fill="#00ffff"/><rect x="16" y="4" width="1" height="1" fill="#808080"/><rect x="1" y="5" width="1" height="1" fill="#000000"/><rect x="2" y="5" width="3" height="1" fill="#ffff00"/><rect x="5" y="5" width="1" height="1" fill="#000000"/><rect x="6" y="5" width="1" height="1" fill="#808080"/><rect x="7" y="5" width="1" height="1" fill="#00ffff"/><rect x="8" y="5" width="6" height="1" fill="#808080"/><rect x="14" y="5" width="2" height="1" fill="#00ffff"/><rect x="16" y="5" width="1" height="1" fill="#808080"/><rect x="1" y="6" width="1" height="1" fill="#000000"/><rect x="2" y="6" width="4" height="1" fill="#ffff00"/><rect x="6" y="6" width="5" height="1" fill="#000000"/><rect x="11" y="6" width="5" height="1" fill="#00ffff"/><rect x="16" y="6" width="1" height="1" fill="#808080"/><rect x="1" y="7" width="1" height="1" fill="#000000"/><rect x="2" y="7" width="8" height="1" fill="#ffff00"/><rect x="10" y="7" width="1" height="1" fill="#000000"/><rect x="11" y="7" width="5" height="1" fill="#00ffff"/><rect x="16" y="7" width="1" height="1" fill="#808080"/><rect x="1" y="8" width="1" height="1" fill="#000000"/><rect x="2" y="8" width="8" height="1" fill="#ffff00"/><rect x="10" y="8" width="1" height="1" fill="#000000"/><rect x="11" y="8" width="1" height="1" fill="#ff0000"/><rect x="12" y="8" width="4" height="1" fill="#00ffff"/><rect x="16" y="8" width="1" height="1" fill="#808080"/><rect x="1" y="9" width="1" height="1" fill="#000000"/><rect x="2" y="9" width="8" height="1" fill="#ffff00"/><rect x="10" y="9" width="1" height="1" fill="#000000"/><rect x="11" y="9" width="1" height="1" fill="#ff0000"/><rect x="12" y="9" width="5" height="1" fill="#808080"/><rect x="1" y="10" width="1" height="1" fill="#000000"/><rect x="2" y="10" width="8" height="1" fill="#ffff00"/><rect x="10" y="10" width="1" height="1" fill="#000000"/><rect x="11" y="10" width="6" height="1" fill="#ff0000"/><rect x="1" y="11" width="1" height="1" fill="#000000"/><rect x="2" y="11" width="8" height="1" fill="#ffff00"/><rect x="10" y="11" width="1" height="1" fill="#000000"/><rect x="11" y="11" width="6" height="1" fill="#ff0000"/><rect x="1" y="12" width="1" height="1" fill="#000000"/><rect x="2" y="12" width="8" height="1" fill="#ffff00"/><rect x="10" y="12" width="1" height="1" fill="#000000"/><rect x="11" y="12" width="1" height="1" fill="#ff0000"/><rect x="12" y="12" width="5" height="1" fill="#800000"/><rect x="1" y="13" width="10" height="1" fill="#000000"/><rect x="11" y="13" width="1" height="1" fill="#ff0000"/><rect x="1" y="14" width="1" height="1" fill="#000000"/><rect x="2" y="14" width="8" height="1" fill="#008000"/><rect x="10" y="14" width="1" height="1" fill="#000000"/><rect x="11" y="14" width="1" height="1" fill="#ff0000"/><rect x="2" y="15" width="1" height="1" fill="#000000"/><rect x="3" y="15" width="6" height="1" fill="#008000"/><rect x="9" y="15" width="1" height="1" fill="#000000"/><rect x="3" y="16" width="6" height="1" fill="#000000"/></svg>
<div class="t" style="left:39px;top:2px;;letter-spacing:-0.016px">MIGRATION ANALYZER</div>
<svg class="a" style="left:23px;top:20px" width="9" height="9" shape-rendering="crispEdges"><rect x="0" y="0" width="9" height="9" fill="#808080"/><rect x="1" y="1" width="7" height="7" fill="#fff"/><rect x="2" y="4" width="5" height="1" fill="#000"/></svg>
<svg class="a" style="left:32px;top:24px" width="7" height="1" shape-rendering="crispEdges"><rect x="0" y="0" width="1" height="1" fill="#808080"/><rect x="2" y="0" width="1" height="1" fill="#808080"/><rect x="4" y="0" width="1" height="1" fill="#808080"/><rect x="6" y="0" width="1" height="1" fill="#808080"/></svg>
<svg class="a" style="left:38px;top:15px" width="18" height="18" shape-rendering="crispEdges"><rect x="10" y="1" width="5" height="1" fill="#808080"/><rect x="8" y="2" width="2" height="1" fill="#808080"/><rect x="10" y="2" width="5" height="1" fill="#00ffff"/><rect x="15" y="2" width="2" height="1" fill="#808080"/><rect x="7" y="3" width="1" height="1" fill="#808080"/><rect x="8" y="3" width="8" height="1" fill="#00ffff"/><rect x="16" y="3" width="1" height="1" fill="#808080"/><rect x="7" y="4" width="1" height="1" fill="#808080"/><rect x="8" y="4" width="8" height="1" fill="#00ffff"/><rect x="16" y="4" width="1" height="1" fill="#808080"/><rect x="4" y="5" width="4" height="1" fill="#000000"/><rect x="8" y="5" width="2" height="1" fill="#00ffff"/><rect x="10" y="5" width="5" height="1" fill="#808080"/><rect x="15" y="5" width="1" height="1" fill="#00ffff"/><rect x="16" y="5" width="1" height="1" fill="#808080"/><rect x="2" y="6" width="2" height="1" fill="#000000"/><rect x="4" y="6" width="4" height="1" fill="#008000"/><rect x="8" y="6" width="2" height="1" fill="#000000"/><rect x="10" y="6" width="6" height="1" fill="#00ffff"/><rect x="16" y="6" width="1" height="1" fill="#808080"/><rect x="1" y="7" width="1" height="1" fill="#000000"/><rect x="2" y="7" width="8" height="1" fill="#008000"/><rect x="10" y="7" width="1" height="1" fill="#000000"/><rect x="11" y="7" width="5" height="1" fill="#00ffff"/><rect x="16" y="7" width="1" height="1" fill="#808080"/><rect x="1" y="8" width="1" height="1" fill="#000000"/><rect x="2" y="8" width="8" height="1" fill="#008000"/><rect x="10" y="8" width="1" height="1" fill="#000000"/><rect x="11" y="8" width="1" height="1" fill="#ff0000"/><rect x="12" y="8" width="4" height="1" fill="#00ffff"/><rect x="16" y="8" width="1" height="1" fill="#808080"/><rect x="1" y="9" width="1" height="1" fill="#000000"/><rect x="2" y="9" width="1" height="1" fill="#008000"/><rect x="3" y="9" width="6" height="1" fill="#000000"/><rect x="9" y="9" width="1" height="1" fill="#008000"/><rect x="10" y="9" width="7" height="1" fill="#ff0000"/><rect x="1" y="10" width="1" height="1" fill="#000000"/><rect x="2" y="10" width="6" height="1" fill="#008000"/><rect x="8" y="10" width="9" height="1" fill="#ff0000"/><rect x="1" y="11" width="1" height="1" fill="#000000"/><rect x="2" y="11" width="7" height="1" fill="#008000"/><rect x="9" y="11" width="2" height="1" fill="#ff0000"/><rect x="11" y="11" width="6" height="1" fill="#800000"/><rect x="1" y="12" width="1" height="1" fill="#000000"/><rect x="2" y="12" width="8" height="1" fill="#008000"/><rect x="10" y="12" width="1" height="1" fill="#000000"/><rect x="11" y="12" width="2" height="1" fill="#ff0000"/><rect x="1" y="13" width="1" height="1" fill="#000000"/><rect x="2" y="13" width="1" height="1" fill="#008000"/><rect x="3" y="13" width="6" height="1" fill="#000000"/><rect x="9" y="13" width="1" height="1" fill="#008000"/><rect x="10" y="13" width="1" height="1" fill="#000000"/><rect x="11" y="13" width="1" height="1" fill="#ff0000"/><rect x="1" y="14" width="1" height="1" fill="#000000"/><rect x="2" y="14" width="8" height="1" fill="#008000"/><rect x="10" y="14" width="1" height="1" fill="#000000"/><rect x="2" y="15" width="2" height="1" fill="#000000"/><rect x="4" y="15" width="4" height="1" fill="#008000"/><rect x="8" y="15" width="2" height="1" fill="#000000"/><rect x="4" y="16" width="4" height="1" fill="#000000"/></svg>
<div class="t" style="left:58px;top:18px;;letter-spacing:-0.285px">Optimization Goal Parameter</div>
<svg class="a" style="left:42px;top:36px" width="9" height="9" shape-rendering="crispEdges"><rect x="0" y="0" width="9" height="9" fill="#808080"/><rect x="1" y="1" width="7" height="7" fill="#fff"/><rect x="2" y="4" width="5" height="1" fill="#000"/></svg>
<svg class="a" style="left:51px;top:40px" width="7" height="1" shape-rendering="crispEdges"><rect x="0" y="0" width="1" height="1" fill="#808080"/><rect x="2" y="0" width="1" height="1" fill="#808080"/><rect x="4" y="0" width="1" height="1" fill="#808080"/><rect x="6" y="0" width="1" height="1" fill="#808080"/></svg>
<svg class="a" style="left:57px;top:31px" width="18" height="18" shape-rendering="crispEdges"><rect x="7" y="1" width="3" height="1" fill="#000000"/><rect x="11" y="1" width="1" height="1" fill="#d8c0c0"/><rect x="12" y="1" width="2" height="1" fill="#00ffff"/><rect x="15" y="1" width="3" height="1" fill="#000000"/><rect x="7" y="2" width="1" height="1" fill="#000000"/><rect x="8" y="2" width="1" height="1" fill="#ffffff"/><rect x="9" y="2" width="1" height="1" fill="#000000"/><rect x="11" y="2" width="1" height="1" fill="#d8c0c0"/><rect x="12" y="2" width="1" height="1" fill="#00ffff"/><rect x="13" y="2" width="1" height="1" fill="#d8c0c0"/><rect x="14" y="2" width="1" height="1" fill="#00ffff"/><rect x="15" y="2" width="1" height="1" fill="#000000"/><rect x="16" y="2" width="1" height="1" fill="#ffffff"/><rect x="17" y="2" width="1" height="1" fill="#000000"/><rect x="7" y="3" width="11" height="1" fill="#000000"/><rect x="7" y="4" width="1" height="1" fill="#000000"/><rect x="8" y="4" width="1" height="1" fill="#ffffff"/><rect x="9" y="4" width="1" height="1" fill="#000000"/><rect x="10" y="4" width="2" height="1" fill="#d8c0c0"/><rect x="12" y="4" width="1" height="1" fill="#00ffff"/><rect x="13" y="4" width="1" height="1" fill="#d8c0c0"/><rect x="14" y="4" width="1" height="1" fill="#00ffff"/><rect x="15" y="4" width="1" height="1" fill="#000000"/><rect x="16" y="4" width="1" height="1" fill="#ffffff"/><rect x="17" y="4" width="1" height="1" fill="#000000"/><rect x="1" y="5" width="4" height="1" fill="#000000"/><rect x="7" y="5" width="3" height="1" fill="#000000"/><rect x="10" y="5" width="2" height="1" fill="#d8c0c0"/><rect x="12" y="5" width="2" height="1" fill="#00ffff"/><rect x="14" y="5" width="4" height="1" fill="#000000"/><rect x="1" y="6" width="1" height="1" fill="#000000"/><rect x="2" y="6" width="3" height="1" fill="#ffff00"/><rect x="5" y="6" width="1" height="1" fill="#000000"/><rect x="7" y="6" width="1" height="1" fill="#000000"/><rect x="8" y="6" width="1" height="1" fill="#ffffff"/><rect x="9" y="6" width="1" height="1" fill="#000000"/><rect x="10" y="6" width="1" height="1" fill="#d8c0c0"/><rect x="11" y="6" width="1" height="1" fill="#00ffff"/><rect x="12" y="6" width="1" height="1" fill="#d8c0c0"/><rect x="13" y="6" width="1" height="1" fill="#00ffff"/><rect x="14" y="6" width="1" height="1" fill="#000000"/><rect x="15" y="6" width="1" height="1" fill="#ffffff"/><rect x="16" y="6" width="1" height="1" fill="#000000"/><rect x="1" y="7" width="1" height="1" fill="#000000"/><rect x="2" y="7" width="4" height="1" fill="#ffff00"/><rect x="6" y="7" width="12" height="1" fill="#000000"/><rect x="1" y="8" width="1" height="1" fill="#000000"/><rect x="2" y="8" width="9" height="1" fill="#ffffff"/><rect x="11" y="8" width="1" height="1" fill="#000000"/><rect x="12" y="8" width="1" height="1" fill="#ffffff"/><rect x="13" y="8" width="1" height="1" fill="#000000"/><rect x="14" y="8" width="1" height="1" fill="#d8c0c0"/><rect x="15" y="8" width="1" height="1" fill="#000000"/><rect x="16" y="8" width="1" height="1" fill="#ffffff"/><rect x="17" y="8" width="1" height="1" fill="#000000"/><rect x="1" y="9" width="1" height="1" fill="#000000"/><rect x="2" y="9" width="9" height="1" fill="#ffff00"/><rect x="11" y="9" width="2" height="1" fill="#000000"/><rect x="13" y="9" width="1" height="1" fill="#d8c0c0"/><rect x="14" y="9" width="1" height="1" fill="#00ffff"/><rect x="15" y="9" width="3" height="1" fill="#000000"/><rect x="1" y="10" width="1" height="1" fill="#000000"/><rect x="2" y="10" width="9" height="1" fill="#ffff00"/><rect x="11" y="10" width="1" height="1" fill="#000000"/><rect x="12" y="10" width="1" height="1" fill="#ffffff"/><rect x="13" y="10" width="1" height="1" fill="#000000"/><rect x="14" y="10" width="1" height="1" fill="#00ffff"/><rect x="15" y="10" width="1" height="1" fill="#d8c0c0"/><rect x="16" y="10" width="1" height="1" fill="#ffffff"/><rect x="17" y="10" width="1" height="1" fill="#000000"/><rect x="1" y="11" width="1" height="1" fill="#000000"/><rect x="2" y="11" width="9" height="1" fill="#ffff00"/><rect x="11" y="11" width="2" height="1" fill="#000000"/><rect x="13" y="11" width="1" height="1" fill="#d8c0c0"/><rect x="14" y="11" width="1" height="1" fill="#00ffff"/><rect x="15" y="11" width="3" height="1" fill="#000000"/><rect x="1" y="12" width="1" height="1" fill="#000000"/><rect x="2" y="12" width="9" height="1" fill="#ffff00"/><rect x="11" y="12" width="1" height="1" fill="#000000"/><rect x="12" y="12" width="1" height="1" fill="#ffffff"/><rect x="13" y="12" width="1" height="1" fill="#000000"/><rect x="14" y="12" width="2" height="1" fill="#d8c0c0"/><rect x="16" y="12" width="1" height="1" fill="#ffffff"/><rect x="17" y="12" width="1" height="1" fill="#000000"/><rect x="1" y="13" width="1" height="1" fill="#000000"/><rect x="2" y="13" width="9" height="1" fill="#ffff00"/><rect x="11" y="13" width="7" height="1" fill="#000000"/><rect x="1" y="14" width="11" height="1" fill="#000000"/><rect x="12" y="14" width="1" height="1" fill="#ffffff"/><rect x="13" y="14" width="1" height="1" fill="#000000"/><rect x="14" y="14" width="2" height="1" fill="#00ffff"/><rect x="16" y="14" width="1" height="1" fill="#000000"/><rect x="17" y="14" width="1" height="1" fill="#ffffff"/><rect x="7" y="15" width="3" height="1" fill="#000000"/><rect x="12" y="15" width="1" height="1" fill="#d8c0c0"/><rect x="13" y="15" width="2" height="1" fill="#00ffff"/><rect x="15" y="15" width="1" height="1" fill="#d8c0c0"/><rect x="16" y="15" width="2" height="1" fill="#000000"/><rect x="7" y="16" width="1" height="1" fill="#000000"/><rect x="8" y="16" width="1" height="1" fill="#ffffff"/><rect x="9" y="16" width="1" height="1" fill="#000000"/><rect x="12" y="16" width="1" height="1" fill="#d8c0c0"/><rect x="13" y="16" width="1" height="1" fill="#00ffff"/><rect x="14" y="16" width="2" height="1" fill="#d8c0c0"/><rect x="16" y="16" width="1" height="1" fill="#ffffff"/><rect x="17" y="16" width="1" height="1" fill="#000000"/><rect x="7" y="17" width="3" height="1" fill="#000000"/><rect x="16" y="17" width="2" height="1" fill="#000000"/></svg>
<div class="t" style="left:77px;top:34px;;letter-spacing:-0.098px">Scenarios Analyzed</div>
<svg class="a" style="left:66px;top:56px" width="11" height="1" shape-rendering="crispEdges"><rect x="0" y="0" width="1" height="1" fill="#808080"/><rect x="2" y="0" width="1" height="1" fill="#808080"/><rect x="4" y="0" width="1" height="1" fill="#808080"/><rect x="6" y="0" width="1" height="1" fill="#808080"/><rect x="8" y="0" width="1" height="1" fill="#808080"/><rect x="10" y="0" width="1" height="1" fill="#808080"/></svg>
<svg class="a" style="left:75px;top:47px" width="18" height="18" shape-rendering="crispEdges"><rect x="11" y="1" width="4" height="1" fill="#000000"/><rect x="10" y="2" width="2" height="1" fill="#000000"/><rect x="12" y="2" width="1" height="1" fill="#ffffff"/><rect x="13" y="2" width="3" height="1" fill="#000000"/><rect x="9" y="3" width="1" height="1" fill="#000000"/><rect x="10" y="3" width="1" height="1" fill="#ffffff"/><rect x="11" y="3" width="2" height="1" fill="#000000"/><rect x="13" y="3" width="1" height="1" fill="#d8c0c0"/><rect x="14" y="3" width="2" height="1" fill="#00ffff"/><rect x="16" y="3" width="1" height="1" fill="#000000"/><rect x="8" y="4" width="2" height="1" fill="#000000"/><rect x="10" y="4" width="1" height="1" fill="#ffffff"/><rect x="11" y="4" width="1" height="1" fill="#000000"/><rect x="12" y="4" width="1" height="1" fill="#d8c0c0"/><rect x="13" y="4" width="2" height="1" fill="#00ffff"/><rect x="15" y="4" width="1" height="1" fill="#d8c0c0"/><rect x="16" y="4" width="1" height="1" fill="#00ffff"/><rect x="17" y="4" width="1" height="1" fill="#000000"/><rect x="7" y="5" width="1" height="1" fill="#000000"/><rect x="8" y="5" width="1" height="1" fill="#ffffff"/><rect x="9" y="5" width="2" height="1" fill="#000000"/><rect x="11" y="5" width="1" height="1" fill="#00ffff"/><rect x="12" y="5" width="1" height="1" fill="#d8c0c0"/><rect x="13" y="5" width="1" height="1" fill="#00ffff"/><rect x="14" y="5" width="2" height="1" fill="#d8c0c0"/><rect x="16" y="5" width="2" height="1" fill="#000000"/><rect x="6" y="6" width="2" height="1" fill="#000000"/><rect x="8" y="6" width="1" height="1" fill="#ffffff"/><rect x="9" y="6" width="1" height="1" fill="#000000"/><rect x="10" y="6" width="1" height="1" fill="#d8c0c0"/><rect x="11" y="6" width="1" height="1" fill="#00ffff"/><rect x="12" y="6" width="2" height="1" fill="#d8c0c0"/><rect x="14" y="6" width="1" height="1" fill="#00ffff"/><rect x="15" y="6" width="2" height="1" fill="#000000"/><rect x="17" y="6" width="1" height="1" fill="#ffffff"/><rect x="5" y="7" width="1" height="1" fill="#000000"/><rect x="6" y="7" width="1" height="1" fill="#ffffff"/><rect x="7" y="7" width="2" height="1" fill="#000000"/><rect x="9" y="7" width="1" height="1" fill="#00ffff"/><rect x="10" y="7" width="1" height="1" fill="#d8c0c0"/><rect x="11" y="7" width="2" height="1" fill="#00ffff"/><rect x="13" y="7" width="1" height="1" fill="#d8c0c0"/><rect x="14" y="7" width="1" height="1" fill="#000000"/><rect x="15" y="7" width="1" height="1" fill="#ffffff"/><rect x="16" y="7" width="2" height="1" fill="#000000"/><rect x="4" y="8" width="2" height="1" fill="#000000"/><rect x="6" y="8" width="1" height="1" fill="#ffffff"/><rect x="7" y="8" width="1" height="1" fill="#000000"/><rect x="8" y="8" width="1" height="1" fill="#d8c0c0"/><rect x="9" y="8" width="2" height="1" fill="#00ffff"/><rect x="11" y="8" width="1" height="1" fill="#d8c0c0"/><rect x="12" y="8" width="1" height="1" fill="#00ffff"/><rect x="13" y="8" width="2" height="1" fill="#000000"/><rect x="15" y="8" width="1" height="1" fill="#ffffff"/><rect x="16" y="8" width="1" height="1" fill="#000000"/><rect x="3" y="9" width="1" height="1" fill="#000000"/><rect x="4" y="9" width="1" height="1" fill="#ffffff"/><rect x="5" y="9" width="2" height="1" fill="#000000"/><rect x="7" y="9" width="1" height="1" fill="#00ffff"/><rect x="8" y="9" width="1" height="1" fill="#d8c0c0"/><rect x="9" y="9" width="1" height="1" fill="#00ffff"/><rect x="10" y="9" width="1" height="1" fill="#d8c0c0"/><rect x="11" y="9" width="2" height="1" fill="#000000"/><rect x="13" y="9" width="1" height="1" fill="#ffffff"/><rect x="14" y="9" width="2" height="1" fill="#000000"/><rect x="2" y="10" width="2" height="1" fill="#000000"/><rect x="4" y="10" width="1" height="1" fill="#ffffff"/><rect x="5" y="10" width="1" height="1" fill="#000000"/><rect x="6" y="10" width="1" height="1" fill="#d8c0c0"/><rect x="7" y="10" width="2" height="1" fill="#00ffff"/><rect x="9" y="10" width="1" height="1" fill="#d8c0c0"/><rect x="10" y="10" width="1" height="1" fill="#00ffff"/><rect x="11" y="10" width="1" height="1" fill="#000000"/><rect x="12" y="10" width="1" height="1" fill="#ffffff"/><rect x="13" y="10" width="2" height="1" fill="#000000"/><rect x="2" y="11" width="1" height="1" fill="#000000"/><rect x="3" y="11" width="1" height="1" fill="#ffffff"/><rect x="4" y="11" width="1" height="1" fill="#000000"/><rect x="5" y="11" width="2" height="1" fill="#d8c0c0"/><rect x="7" y="11" width="1" height="1" fill="#00ffff"/><rect x="8" y="11" width="1" height="1" fill="#d8c0c0"/><rect x="9" y="11" width="2" height="1" fill="#000000"/><rect x="11" y="11" width="1" height="1" fill="#ffffff"/><rect x="12" y="11" width="2" height="1" fill="#000000"/><rect x="2" y="12" width="2" height="1" fill="#000000"/><rect x="4" y="12" width="1" height="1" fill="#d8c0c0"/><rect x="5" y="12" width="2" height="1" fill="#00ffff"/><rect x="7" y="12" width="1" height="1" fill="#d8c0c0"/><rect x="8" y="12" width="2" height="1" fill="#000000"/><rect x="10" y="12" width="1" height="1" fill="#ffffff"/><rect x="11" y="12" width="2" height="1" fill="#000000"/><rect x="3" y="13" width="1" height="1" fill="#000000"/><rect x="4" y="13" width="1" height="1" fill="#d8c0c0"/><rect x="5" y="13" width="1" height="1" fill="#00ffff"/><rect x="6" y="13" width="1" height="1" fill="#d8c0c0"/><rect x="7" y="13" width="2" height="1" fill="#000000"/><rect x="9" y="13" width="1" height="1" fill="#ffffff"/><rect x="10" y="13" width="2" height="1" fill="#000000"/><rect x="4" y="14" width="1" height="1" fill="#000000"/><rect x="5" y="14" width="1" height="1" fill="#d8c0c0"/><rect x="6" y="14" width="2" height="1" fill="#000000"/><rect x="8" y="14" width="1" height="1" fill="#ffffff"/><rect x="9" y="14" width="2" height="1" fill="#000000"/><rect x="5" y="15" width="2" height="1" fill="#000000"/><rect x="7" y="15" width="1" height="1" fill="#ffffff"/><rect x="8" y="15" width="2" height="1" fill="#000000"/><rect x="6" y="16" width="3" height="1" fill="#000000"/></svg>
<div class="t" style="left:96px;top:50px;;letter-spacing:-0.194px">Upgrade to new serve</div>
<svg class="a" style="left:42px;top:68px" width="9" height="9" shape-rendering="crispEdges"><rect x="0" y="0" width="9" height="9" fill="#808080"/><rect x="1" y="1" width="7" height="7" fill="#fff"/><rect x="2" y="4" width="5" height="1" fill="#000"/></svg>
<svg class="a" style="left:51px;top:72px" width="7" height="1" shape-rendering="crispEdges"><rect x="0" y="0" width="1" height="1" fill="#808080"/><rect x="2" y="0" width="1" height="1" fill="#808080"/><rect x="4" y="0" width="1" height="1" fill="#808080"/><rect x="6" y="0" width="1" height="1" fill="#808080"/></svg>
<svg class="a" style="left:57px;top:63px" width="18" height="18" shape-rendering="crispEdges"><rect x="5" y="2" width="12" height="1" fill="#000000"/><rect x="5" y="3" width="1" height="1" fill="#000000"/><rect x="16" y="3" width="1" height="1" fill="#0000ff"/><rect x="5" y="4" width="1" height="1" fill="#000000"/><rect x="7" y="4" width="3" height="1" fill="#0000ff"/><rect x="12" y="4" width="3" height="1" fill="#0000ff"/><rect x="16" y="4" width="1" height="1" fill="#0000ff"/><rect x="5" y="5" width="1" height="1" fill="#000000"/><rect x="6" y="5" width="1" height="1" fill="#0000ff"/><rect x="10" y="5" width="2" height="1" fill="#0000ff"/><rect x="15" y="5" width="2" height="1" fill="#0000ff"/><rect x="1" y="6" width="4" height="1" fill="#000000"/><rect x="6" y="6" width="1" height="1" fill="#0000ff"/><rect x="10" y="6" width="2" height="1" fill="#0000ff"/><rect x="15" y="6" width="2" height="1" fill="#0000ff"/><rect x="1" y="7" width="1" height="1" fill="#000000"/><rect x="2" y="7" width="3" height="1" fill="#ffff00"/><rect x="5" y="7" width="1" height="1" fill="#000000"/><rect x="6" y="7" width="2" height="1" fill="#0000ff"/><rect x="10" y="7" width="2" height="1" fill="#0000ff"/><rect x="15" y="7" width="2" height="1" fill="#0000ff"/><rect x="1" y="8" width="1" height="1" fill="#000000"/><rect x="2" y="8" width="4" height="1" fill="#ffff00"/><rect x="6" y="8" width="6" height="1" fill="#000000"/><rect x="15" y="8" width="2" height="1" fill="#0000ff"/><rect x="1" y="9" width="1" height="1" fill="#000000"/><rect x="2" y="9" width="9" height="1" fill="#ffffff"/><rect x="11" y="9" width="1" height="1" fill="#000000"/><rect x="14" y="9" width="3" height="1" fill="#0000ff"/><rect x="1" y="10" width="1" height="1" fill="#000000"/><rect x="2" y="10" width="9" height="1" fill="#ffff00"/><rect x="11" y="10" width="1" height="1" fill="#000000"/><rect x="13" y="10" width="1" height="1" fill="#0000ff"/><rect x="15" y="10" width="3" height="1" fill="#0000ff"/><rect x="1" y="11" width="1" height="1" fill="#000000"/><rect x="2" y="11" width="9" height="1" fill="#ffff00"/><rect x="11" y="11" width="1" height="1" fill="#000000"/><rect x="12" y="11" width="4" height="1" fill="#0000ff"/><rect x="1" y="12" width="1" height="1" fill="#000000"/><rect x="2" y="12" width="9" height="1" fill="#ffff00"/><rect x="11" y="12" width="6" height="1" fill="#000000"/><rect x="1" y="13" width="1" height="1" fill="#000000"/><rect x="2" y="13" width="9" height="1" fill="#ffff00"/><rect x="11" y="13" width="1" height="1" fill="#000000"/><rect x="1" y="14" width="11" height="1" fill="#000000"/></svg>
<div class="t" style="left:77px;top:66px;;letter-spacing:-0.078px">SQL Analyzed</div>
<svg class="a" style="left:66px;top:88px" width="11" height="1" shape-rendering="crispEdges"><rect x="0" y="0" width="1" height="1" fill="#808080"/><rect x="2" y="0" width="1" height="1" fill="#808080"/><rect x="4" y="0" width="1" height="1" fill="#808080"/><rect x="6" y="0" width="1" height="1" fill="#808080"/><rect x="8" y="0" width="1" height="1" fill="#808080"/><rect x="10" y="0" width="1" height="1" fill="#808080"/></svg>
<svg class="a" style="left:78px;top:83px" width="15" height="11" shape-rendering="crispEdges"><rect x="0" y="0" width="15" height="1" fill="#000000"/><rect x="0" y="1" width="1" height="1" fill="#000000"/><rect x="1" y="1" width="13" height="1" fill="#ffffff"/><rect x="14" y="1" width="1" height="1" fill="#000000"/><rect x="0" y="2" width="1" height="1" fill="#000000"/><rect x="1" y="2" width="1" height="1" fill="#ffffff"/><rect x="2" y="2" width="2" height="1" fill="#0000ff"/><rect x="4" y="2" width="3" height="1" fill="#ffffff"/><rect x="7" y="2" width="2" height="1" fill="#0000ff"/><rect x="9" y="2" width="2" height="1" fill="#ffffff"/><rect x="11" y="2" width="1" height="1" fill="#0000ff"/><rect x="12" y="2" width="2" height="1" fill="#ffffff"/><rect x="14" y="2" width="1" height="1" fill="#000000"/><rect x="0" y="3" width="1" height="1" fill="#000000"/><rect x="1" y="3" width="1" height="1" fill="#0000ff"/><rect x="2" y="3" width="2" height="1" fill="#ffffff"/><rect x="4" y="3" width="1" height="1" fill="#0000ff"/><rect x="5" y="3" width="1" height="1" fill="#ffffff"/><rect x="6" y="3" width="1" height="1" fill="#0000ff"/><rect x="7" y="3" width="2" height="1" fill="#ffffff"/><rect x="9" y="3" width="1" height="1" fill="#0000ff"/><rect x="10" y="3" width="1" height="1" fill="#ffffff"/><rect x="11" y="3" width="1" height="1" fill="#0000ff"/><rect x="12" y="3" width="2" height="1" fill="#ffffff"/><rect x="14" y="3" width="1" height="1" fill="#000000"/><rect x="0" y="4" width="1" height="1" fill="#000000"/><rect x="1" y="4" width="1" height="1" fill="#0000ff"/><rect x="2" y="4" width="4" height="1" fill="#ffffff"/><rect x="6" y="4" width="1" height="1" fill="#0000ff"/><rect x="7" y="4" width="2" height="1" fill="#ffffff"/><rect x="9" y="4" width="1" height="1" fill="#0000ff"/><rect x="10" y="4" width="1" height="1" fill="#ffffff"/><rect x="11" y="4" width="1" height="1" fill="#0000ff"/><rect x="12" y="4" width="2" height="1" fill="#ffffff"/><rect x="14" y="4" width="1" height="1" fill="#000000"/><rect x="0" y="5" width="1" height="1" fill="#000000"/><rect x="1" y="5" width="1" height="1" fill="#ffffff"/><rect x="2" y="5" width="2" height="1" fill="#0000ff"/><rect x="4" y="5" width="2" height="1" fill="#ffffff"/><rect x="6" y="5" width="1" height="1" fill="#0000ff"/><rect x="7" y="5" width="2" height="1" fill="#ffffff"/><rect x="9" y="5" width="1" height="1" fill="#0000ff"/><rect x="10" y="5" width="1" height="1" fill="#ffffff"/><rect x="11" y="5" width="1" height="1" fill="#0000ff"/><rect x="12" y="5" width="2" height="1" fill="#ffffff"/><rect x="14" y="5" width="1" height="1" fill="#000000"/><rect x="0" y="6" width="1" height="1" fill="#000000"/><rect x="1" y="6" width="3" height="1" fill="#ffffff"/><rect x="4" y="6" width="1" height="1" fill="#0000ff"/><rect x="5" y="6" width="1" height="1" fill="#ffffff"/><rect x="6" y="6" width="1" height="1" fill="#0000ff"/><rect x="7" y="6" width="2" height="1" fill="#ffffff"/><rect x="9" y="6" width="1" height="1" fill="#0000ff"/><rect x="10" y="6" width="1" height="1" fill="#ffffff"/><rect x="11" y="6" width="1" height="1" fill="#0000ff"/><rect x="12" y="6" width="2" height="1" fill="#ffffff"/><rect x="14" y="6" width="1" height="1" fill="#000000"/><rect x="0" y="7" width="1" height="1" fill="#000000"/><rect x="1" y="7" width="1" height="1" fill="#0000ff"/><rect x="2" y="7" width="2" height="1" fill="#ffffff"/><rect x="4" y="7" width="1" height="1" fill="#0000ff"/><rect x="5" y="7" width="1" height="1" fill="#ffffff"/><rect x="6" y="7" width="1" height="1" fill="#0000ff"/><rect x="7" y="7" width="1" height="1" fill="#ffffff"/><rect x="8" y="7" width="2" height="1" fill="#0000ff"/><rect x="10" y="7" width="1" height="1" fill="#ffffff"/><rect x="11" y="7" width="1" height="1" fill="#0000ff"/><rect x="12" y="7" width="2" height="1" fill="#ffffff"/><rect x="14" y="7" width="1" height="1" fill="#000000"/><rect x="0" y="8" width="1" height="1" fill="#000000"/><rect x="1" y="8" width="1" height="1" fill="#ffffff"/><rect x="2" y="8" width="2" height="1" fill="#0000ff"/><rect x="4" y="8" width="3" height="1" fill="#ffffff"/><rect x="7" y="8" width="2" height="1" fill="#0000ff"/><rect x="9" y="8" width="2" height="1" fill="#ffffff"/><rect x="11" y="8" width="3" height="1" fill="#0000ff"/><rect x="14" y="8" width="1" height="1" fill="#000000"/><rect x="0" y="9" width="1" height="1" fill="#000000"/><rect x="1" y="9" width="8" height="1" fill="#ffffff"/><rect x="9" y="9" width="1" height="1" fill="#0000ff"/><rect x="10" y="9" width="4" height="1" fill="#ffffff"/><rect x="14" y="9" width="1" height="1" fill="#000000"/><rect x="0" y="10" width="15" height="1" fill="#000000"/></svg>
<div class="t" style="left:96px;top:82px;;letter-spacing:0.107px">SQL\SQL1</div>
<svg class="a" style="left:66px;top:104px" width="11" height="1" shape-rendering="crispEdges"><rect x="0" y="0" width="1" height="1" fill="#808080"/><rect x="2" y="0" width="1" height="1" fill="#808080"/><rect x="4" y="0" width="1" height="1" fill="#808080"/><rect x="6" y="0" width="1" height="1" fill="#808080"/><rect x="8" y="0" width="1" height="1" fill="#808080"/><rect x="10" y="0" width="1" height="1" fill="#808080"/></svg>
<svg class="a" style="left:78px;top:99px" width="15" height="11" shape-rendering="crispEdges"><rect x="0" y="0" width="15" height="1" fill="#000000"/><rect x="0" y="1" width="1" height="1" fill="#000000"/><rect x="1" y="1" width="13" height="1" fill="#ffffff"/><rect x="14" y="1" width="1" height="1" fill="#000000"/><rect x="0" y="2" width="1" height="1" fill="#000000"/><rect x="1" y="2" width="1" height="1" fill="#ffffff"/><rect x="2" y="2" width="2" height="1" fill="#0000ff"/><rect x="4" y="2" width="3" height="1" fill="#ffffff"/><rect x="7" y="2" width="2" height="1" fill="#0000ff"/><rect x="9" y="2" width="2" height="1" fill="#ffffff"/><rect x="11" y="2" width="1" height="1" fill="#0000ff"/><rect x="12" y="2" width="2" height="1" fill="#ffffff"/><rect x="14" y="2" width="1" height="1" fill="#000000"/><rect x="0" y="3" width="1" height="1" fill="#000000"/><rect x="1" y="3" width="1" height="1" fill="#0000ff"/><rect x="2" y="3" width="2" height="1" fill="#ffffff"/><rect x="4" y="3" width="1" height="1" fill="#0000ff"/><rect x="5" y="3" width="1" height="1" fill="#ffffff"/><rect x="6" y="3" width="1" height="1" fill="#0000ff"/><rect x="7" y="3" width="2" height="1" fill="#ffffff"/><rect x="9" y="3" width="1" height="1" fill="#0000ff"/><rect x="10" y="3" width="1" height="1" fill="#ffffff"/><rect x="11" y="3" width="1" height="1" fill="#0000ff"/><rect x="12" y="3" width="2" height="1" fill="#ffffff"/><rect x="14" y="3" width="1" height="1" fill="#000000"/><rect x="0" y="4" width="1" height="1" fill="#000000"/><rect x="1" y="4" width="1" height="1" fill="#0000ff"/><rect x="2" y="4" width="4" height="1" fill="#ffffff"/><rect x="6" y="4" width="1" height="1" fill="#0000ff"/><rect x="7" y="4" width="2" height="1" fill="#ffffff"/><rect x="9" y="4" width="1" height="1" fill="#0000ff"/><rect x="10" y="4" width="1" height="1" fill="#ffffff"/><rect x="11" y="4" width="1" height="1" fill="#0000ff"/><rect x="12" y="4" width="2" height="1" fill="#ffffff"/><rect x="14" y="4" width="1" height="1" fill="#000000"/><rect x="0" y="5" width="1" height="1" fill="#000000"/><rect x="1" y="5" width="1" height="1" fill="#ffffff"/><rect x="2" y="5" width="2" height="1" fill="#0000ff"/><rect x="4" y="5" width="2" height="1" fill="#ffffff"/><rect x="6" y="5" width="1" height="1" fill="#0000ff"/><rect x="7" y="5" width="2" height="1" fill="#ffffff"/><rect x="9" y="5" width="1" height="1" fill="#0000ff"/><rect x="10" y="5" width="1" height="1" fill="#ffffff"/><rect x="11" y="5" width="1" height="1" fill="#0000ff"/><rect x="12" y="5" width="2" height="1" fill="#ffffff"/><rect x="14" y="5" width="1" height="1" fill="#000000"/><rect x="0" y="6" width="1" height="1" fill="#000000"/><rect x="1" y="6" width="3" height="1" fill="#ffffff"/><rect x="4" y="6" width="1" height="1" fill="#0000ff"/><rect x="5" y="6" width="1" height="1" fill="#ffffff"/><rect x="6" y="6" width="1" height="1" fill="#0000ff"/><rect x="7" y="6" width="2" height="1" fill="#ffffff"/><rect x="9" y="6" width="1" height="1" fill="#0000ff"/><rect x="10" y="6" width="1" height="1" fill="#ffffff"/><rect x="11" y="6" width="1" height="1" fill="#0000ff"/><rect x="12" y="6" width="2" height="1" fill="#ffffff"/><rect x="14" y="6" width="1" height="1" fill="#000000"/><rect x="0" y="7" width="1" height="1" fill="#000000"/><rect x="1" y="7" width="1" height="1" fill="#0000ff"/><rect x="2" y="7" width="2" height="1" fill="#ffffff"/><rect x="4" y="7" width="1" height="1" fill="#0000ff"/><rect x="5" y="7" width="1" height="1" fill="#ffffff"/><rect x="6" y="7" width="1" height="1" fill="#0000ff"/><rect x="7" y="7" width="1" height="1" fill="#ffffff"/><rect x="8" y="7" width="2" height="1" fill="#0000ff"/><rect x="10" y="7" width="1" height="1" fill="#ffffff"/><rect x="11" y="7" width="1" height="1" fill="#0000ff"/><rect x="12" y="7" width="2" height="1" fill="#ffffff"/><rect x="14" y="7" width="1" height="1" fill="#000000"/><rect x="0" y="8" width="1" height="1" fill="#000000"/><rect x="1" y="8" width="1" height="1" fill="#ffffff"/><rect x="2" y="8" width="2" height="1" fill="#0000ff"/><rect x="4" y="8" width="3" height="1" fill="#ffffff"/><rect x="7" y="8" width="2" height="1" fill="#0000ff"/><rect x="9" y="8" width="2" height="1" fill="#ffffff"/><rect x="11" y="8" width="3" height="1" fill="#0000ff"/><rect x="14" y="8" width="1" height="1" fill="#000000"/><rect x="0" y="9" width="1" height="1" fill="#000000"/><rect x="1" y="9" width="8" height="1" fill="#ffffff"/><rect x="9" y="9" width="1" height="1" fill="#0000ff"/><rect x="10" y="9" width="4" height="1" fill="#ffffff"/><rect x="14" y="9" width="1" height="1" fill="#000000"/><rect x="0" y="10" width="15" height="1" fill="#000000"/></svg>
<div class="t" style="left:96px;top:98px;">SQL\[sybase] [dbo] v</div>
<svg class="a" style="left:66px;top:120px" width="11" height="1" shape-rendering="crispEdges"><rect x="0" y="0" width="1" height="1" fill="#808080"/><rect x="2" y="0" width="1" height="1" fill="#808080"/><rect x="4" y="0" width="1" height="1" fill="#808080"/><rect x="6" y="0" width="1" height="1" fill="#808080"/><rect x="8" y="0" width="1" height="1" fill="#808080"/><rect x="10" y="0" width="1" height="1" fill="#808080"/></svg>
<svg class="a" style="left:78px;top:115px" width="15" height="11" shape-rendering="crispEdges"><rect x="0" y="0" width="15" height="1" fill="#000000"/><rect x="0" y="1" width="1" height="1" fill="#000000"/><rect x="1" y="1" width="13" height="1" fill="#ffffff"/><rect x="14" y="1" width="1" height="1" fill="#000000"/><rect x="0" y="2" width="1" height="1" fill="#000000"/><rect x="1" y="2" width="1" height="1" fill="#ffffff"/><rect x="2" y="2" width="2" height="1" fill="#0000ff"/><rect x="4" y="2" width="3" height="1" fill="#ffffff"/><rect x="7" y="2" width="2" height="1" fill="#0000ff"/><rect x="9" y="2" width="2" height="1" fill="#ffffff"/><rect x="11" y="2" width="1" height="1" fill="#0000ff"/><rect x="12" y="2" width="2" height="1" fill="#ffffff"/><rect x="14" y="2" width="1" height="1" fill="#000000"/><rect x="0" y="3" width="1" height="1" fill="#000000"/><rect x="1" y="3" width="1" height="1" fill="#0000ff"/><rect x="2" y="3" width="2" height="1" fill="#ffffff"/><rect x="4" y="3" width="1" height="1" fill="#0000ff"/><rect x="5" y="3" width="1" height="1" fill="#ffffff"/><rect x="6" y="3" width="1" height="1" fill="#0000ff"/><rect x="7" y="3" width="2" height="1" fill="#ffffff"/><rect x="9" y="3" width="1" height="1" fill="#0000ff"/><rect x="10" y="3" width="1" height="1" fill="#ffffff"/><rect x="11" y="3" width="1" height="1" fill="#0000ff"/><rect x="12" y="3" width="2" height="1" fill="#ffffff"/><rect x="14" y="3" width="1" height="1" fill="#000000"/><rect x="0" y="4" width="1" height="1" fill="#000000"/><rect x="1" y="4" width="1" height="1" fill="#0000ff"/><rect x="2" y="4" width="4" height="1" fill="#ffffff"/><rect x="6" y="4" width="1" height="1" fill="#0000ff"/><rect x="7" y="4" width="2" height="1" fill="#ffffff"/><rect x="9" y="4" width="1" height="1" fill="#0000ff"/><rect x="10" y="4" width="1" height="1" fill="#ffffff"/><rect x="11" y="4" width="1" height="1" fill="#0000ff"/><rect x="12" y="4" width="2" height="1" fill="#ffffff"/><rect x="14" y="4" width="1" height="1" fill="#000000"/><rect x="0" y="5" width="1" height="1" fill="#000000"/><rect x="1" y="5" width="1" height="1" fill="#ffffff"/><rect x="2" y="5" width="2" height="1" fill="#0000ff"/><rect x="4" y="5" width="2" height="1" fill="#ffffff"/><rect x="6" y="5" width="1" height="1" fill="#0000ff"/><rect x="7" y="5" width="2" height="1" fill="#ffffff"/><rect x="9" y="5" width="1" height="1" fill="#0000ff"/><rect x="10" y="5" width="1" height="1" fill="#ffffff"/><rect x="11" y="5" width="1" height="1" fill="#0000ff"/><rect x="12" y="5" width="2" height="1" fill="#ffffff"/><rect x="14" y="5" width="1" height="1" fill="#000000"/><rect x="0" y="6" width="1" height="1" fill="#000000"/><rect x="1" y="6" width="3" height="1" fill="#ffffff"/><rect x="4" y="6" width="1" height="1" fill="#0000ff"/><rect x="5" y="6" width="1" height="1" fill="#ffffff"/><rect x="6" y="6" width="1" height="1" fill="#0000ff"/><rect x="7" y="6" width="2" height="1" fill="#ffffff"/><rect x="9" y="6" width="1" height="1" fill="#0000ff"/><rect x="10" y="6" width="1" height="1" fill="#ffffff"/><rect x="11" y="6" width="1" height="1" fill="#0000ff"/><rect x="12" y="6" width="2" height="1" fill="#ffffff"/><rect x="14" y="6" width="1" height="1" fill="#000000"/><rect x="0" y="7" width="1" height="1" fill="#000000"/><rect x="1" y="7" width="1" height="1" fill="#0000ff"/><rect x="2" y="7" width="2" height="1" fill="#ffffff"/><rect x="4" y="7" width="1" height="1" fill="#0000ff"/><rect x="5" y="7" width="1" height="1" fill="#ffffff"/><rect x="6" y="7" width="1" height="1" fill="#0000ff"/><rect x="7" y="7" width="1" height="1" fill="#ffffff"/><rect x="8" y="7" width="2" height="1" fill="#0000ff"/><rect x="10" y="7" width="1" height="1" fill="#ffffff"/><rect x="11" y="7" width="1" height="1" fill="#0000ff"/><rect x="12" y="7" width="2" height="1" fill="#ffffff"/><rect x="14" y="7" width="1" height="1" fill="#000000"/><rect x="0" y="8" width="1" height="1" fill="#000000"/><rect x="1" y="8" width="1" height="1" fill="#ffffff"/><rect x="2" y="8" width="2" height="1" fill="#0000ff"/><rect x="4" y="8" width="3" height="1" fill="#ffffff"/><rect x="7" y="8" width="2" height="1" fill="#0000ff"/><rect x="9" y="8" width="2" height="1" fill="#ffffff"/><rect x="11" y="8" width="3" height="1" fill="#0000ff"/><rect x="14" y="8" width="1" height="1" fill="#000000"/><rect x="0" y="9" width="1" height="1" fill="#000000"/><rect x="1" y="9" width="8" height="1" fill="#ffffff"/><rect x="9" y="9" width="1" height="1" fill="#0000ff"/><rect x="10" y="9" width="4" height="1" fill="#ffffff"/><rect x="14" y="9" width="1" height="1" fill="#000000"/><rect x="0" y="10" width="15" height="1" fill="#000000"/></svg>
<div class="t" style="left:96px;top:114px;">SQL\[sybase] [dbo] v</div>
<svg class="a" style="left:66px;top:136px" width="11" height="1" shape-rendering="crispEdges"><rect x="0" y="0" width="1" height="1" fill="#808080"/><rect x="2" y="0" width="1" height="1" fill="#808080"/><rect x="4" y="0" width="1" height="1" fill="#808080"/><rect x="6" y="0" width="1" height="1" fill="#808080"/><rect x="8" y="0" width="1" height="1" fill="#808080"/><rect x="10" y="0" width="1" height="1" fill="#808080"/></svg>
<svg class="a" style="left:78px;top:131px" width="15" height="11" shape-rendering="crispEdges"><rect x="0" y="0" width="15" height="1" fill="#000000"/><rect x="0" y="1" width="1" height="1" fill="#000000"/><rect x="1" y="1" width="13" height="1" fill="#ffffff"/><rect x="14" y="1" width="1" height="1" fill="#000000"/><rect x="0" y="2" width="1" height="1" fill="#000000"/><rect x="1" y="2" width="1" height="1" fill="#ffffff"/><rect x="2" y="2" width="2" height="1" fill="#0000ff"/><rect x="4" y="2" width="3" height="1" fill="#ffffff"/><rect x="7" y="2" width="2" height="1" fill="#0000ff"/><rect x="9" y="2" width="2" height="1" fill="#ffffff"/><rect x="11" y="2" width="1" height="1" fill="#0000ff"/><rect x="12" y="2" width="2" height="1" fill="#ffffff"/><rect x="14" y="2" width="1" height="1" fill="#000000"/><rect x="0" y="3" width="1" height="1" fill="#000000"/><rect x="1" y="3" width="1" height="1" fill="#0000ff"/><rect x="2" y="3" width="2" height="1" fill="#ffffff"/><rect x="4" y="3" width="1" height="1" fill="#0000ff"/><rect x="5" y="3" width="1" height="1" fill="#ffffff"/><rect x="6" y="3" width="1" height="1" fill="#0000ff"/><rect x="7" y="3" width="2" height="1" fill="#ffffff"/><rect x="9" y="3" width="1" height="1" fill="#0000ff"/><rect x="10" y="3" width="1" height="1" fill="#ffffff"/><rect x="11" y="3" width="1" height="1" fill="#0000ff"/><rect x="12" y="3" width="2" height="1" fill="#ffffff"/><rect x="14" y="3" width="1" height="1" fill="#000000"/><rect x="0" y="4" width="1" height="1" fill="#000000"/><rect x="1" y="4" width="1" height="1" fill="#0000ff"/><rect x="2" y="4" width="4" height="1" fill="#ffffff"/><rect x="6" y="4" width="1" height="1" fill="#0000ff"/><rect x="7" y="4" width="2" height="1" fill="#ffffff"/><rect x="9" y="4" width="1" height="1" fill="#0000ff"/><rect x="10" y="4" width="1" height="1" fill="#ffffff"/><rect x="11" y="4" width="1" height="1" fill="#0000ff"/><rect x="12" y="4" width="2" height="1" fill="#ffffff"/><rect x="14" y="4" width="1" height="1" fill="#000000"/><rect x="0" y="5" width="1" height="1" fill="#000000"/><rect x="1" y="5" width="1" height="1" fill="#ffffff"/><rect x="2" y="5" width="2" height="1" fill="#0000ff"/><rect x="4" y="5" width="2" height="1" fill="#ffffff"/><rect x="6" y="5" width="1" height="1" fill="#0000ff"/><rect x="7" y="5" width="2" height="1" fill="#ffffff"/><rect x="9" y="5" width="1" height="1" fill="#0000ff"/><rect x="10" y="5" width="1" height="1" fill="#ffffff"/><rect x="11" y="5" width="1" height="1" fill="#0000ff"/><rect x="12" y="5" width="2" height="1" fill="#ffffff"/><rect x="14" y="5" width="1" height="1" fill="#000000"/><rect x="0" y="6" width="1" height="1" fill="#000000"/><rect x="1" y="6" width="3" height="1" fill="#ffffff"/><rect x="4" y="6" width="1" height="1" fill="#0000ff"/><rect x="5" y="6" width="1" height="1" fill="#ffffff"/><rect x="6" y="6" width="1" height="1" fill="#0000ff"/><rect x="7" y="6" width="2" height="1" fill="#ffffff"/><rect x="9" y="6" width="1" height="1" fill="#0000ff"/><rect x="10" y="6" width="1" height="1" fill="#ffffff"/><rect x="11" y="6" width="1" height="1" fill="#0000ff"/><rect x="12" y="6" width="2" height="1" fill="#ffffff"/><rect x="14" y="6" width="1" height="1" fill="#000000"/><rect x="0" y="7" width="1" height="1" fill="#000000"/><rect x="1" y="7" width="1" height="1" fill="#0000ff"/><rect x="2" y="7" width="2" height="1" fill="#ffffff"/><rect x="4" y="7" width="1" height="1" fill="#0000ff"/><rect x="5" y="7" width="1" height="1" fill="#ffffff"/><rect x="6" y="7" width="1" height="1" fill="#0000ff"/><rect x="7" y="7" width="1" height="1" fill="#ffffff"/><rect x="8" y="7" width="2" height="1" fill="#0000ff"/><rect x="10" y="7" width="1" height="1" fill="#ffffff"/><rect x="11" y="7" width="1" height="1" fill="#0000ff"/><rect x="12" y="7" width="2" height="1" fill="#ffffff"/><rect x="14" y="7" width="1" height="1" fill="#000000"/><rect x="0" y="8" width="1" height="1" fill="#000000"/><rect x="1" y="8" width="1" height="1" fill="#ffffff"/><rect x="2" y="8" width="2" height="1" fill="#0000ff"/><rect x="4" y="8" width="3" height="1" fill="#ffffff"/><rect x="7" y="8" width="2" height="1" fill="#0000ff"/><rect x="9" y="8" width="2" height="1" fill="#ffffff"/><rect x="11" y="8" width="3" height="1" fill="#0000ff"/><rect x="14" y="8" width="1" height="1" fill="#000000"/><rect x="0" y="9" width="1" height="1" fill="#000000"/><rect x="1" y="9" width="8" height="1" fill="#ffffff"/><rect x="9" y="9" width="1" height="1" fill="#0000ff"/><rect x="10" y="9" width="4" height="1" fill="#ffffff"/><rect x="14" y="9" width="1" height="1" fill="#000000"/><rect x="0" y="10" width="15" height="1" fill="#000000"/></svg>
<div class="t" style="left:96px;top:130px;">SQL\[sybase] [dbo] v</div>
<svg class="a" style="left:66px;top:152px" width="11" height="1" shape-rendering="crispEdges"><rect x="0" y="0" width="1" height="1" fill="#808080"/><rect x="2" y="0" width="1" height="1" fill="#808080"/><rect x="4" y="0" width="1" height="1" fill="#808080"/><rect x="6" y="0" width="1" height="1" fill="#808080"/><rect x="8" y="0" width="1" height="1" fill="#808080"/><rect x="10" y="0" width="1" height="1" fill="#808080"/></svg>
<svg class="a" style="left:78px;top:147px" width="15" height="11" shape-rendering="crispEdges"><rect x="0" y="0" width="15" height="1" fill="#000000"/><rect x="0" y="1" width="1" height="1" fill="#000000"/><rect x="1" y="1" width="13" height="1" fill="#ffffff"/><rect x="14" y="1" width="1" height="1" fill="#000000"/><rect x="0" y="2" width="1" height="1" fill="#000000"/><rect x="1" y="2" width="1" height="1" fill="#ffffff"/><rect x="2" y="2" width="2" height="1" fill="#0000ff"/><rect x="4" y="2" width="3" height="1" fill="#ffffff"/><rect x="7" y="2" width="2" height="1" fill="#0000ff"/><rect x="9" y="2" width="2" height="1" fill="#ffffff"/><rect x="11" y="2" width="1" height="1" fill="#0000ff"/><rect x="12" y="2" width="2" height="1" fill="#ffffff"/><rect x="14" y="2" width="1" height="1" fill="#000000"/><rect x="0" y="3" width="1" height="1" fill="#000000"/><rect x="1" y="3" width="1" height="1" fill="#0000ff"/><rect x="2" y="3" width="2" height="1" fill="#ffffff"/><rect x="4" y="3" width="1" height="1" fill="#0000ff"/><rect x="5" y="3" width="1" height="1" fill="#ffffff"/><rect x="6" y="3" width="1" height="1" fill="#0000ff"/><rect x="7" y="3" width="2" height="1" fill="#ffffff"/><rect x="9" y="3" width="1" height="1" fill="#0000ff"/><rect x="10" y="3" width="1" height="1" fill="#ffffff"/><rect x="11" y="3" width="1" height="1" fill="#0000ff"/><rect x="12" y="3" width="2" height="1" fill="#ffffff"/><rect x="14" y="3" width="1" height="1" fill="#000000"/><rect x="0" y="4" width="1" height="1" fill="#000000"/><rect x="1" y="4" width="1" height="1" fill="#0000ff"/><rect x="2" y="4" width="4" height="1" fill="#ffffff"/><rect x="6" y="4" width="1" height="1" fill="#0000ff"/><rect x="7" y="4" width="2" height="1" fill="#ffffff"/><rect x="9" y="4" width="1" height="1" fill="#0000ff"/><rect x="10" y="4" width="1" height="1" fill="#ffffff"/><rect x="11" y="4" width="1" height="1" fill="#0000ff"/><rect x="12" y="4" width="2" height="1" fill="#ffffff"/><rect x="14" y="4" width="1" height="1" fill="#000000"/><rect x="0" y="5" width="1" height="1" fill="#000000"/><rect x="1" y="5" width="1" height="1" fill="#ffffff"/><rect x="2" y="5" width="2" height="1" fill="#0000ff"/><rect x="4" y="5" width="2" height="1" fill="#ffffff"/><rect x="6" y="5" width="1" height="1" fill="#0000ff"/><rect x="7" y="5" width="2" height="1" fill="#ffffff"/><rect x="9" y="5" width="1" height="1" fill="#0000ff"/><rect x="10" y="5" width="1" height="1" fill="#ffffff"/><rect x="11" y="5" width="1" height="1" fill="#0000ff"/><rect x="12" y="5" width="2" height="1" fill="#ffffff"/><rect x="14" y="5" width="1" height="1" fill="#000000"/><rect x="0" y="6" width="1" height="1" fill="#000000"/><rect x="1" y="6" width="3" height="1" fill="#ffffff"/><rect x="4" y="6" width="1" height="1" fill="#0000ff"/><rect x="5" y="6" width="1" height="1" fill="#ffffff"/><rect x="6" y="6" width="1" height="1" fill="#0000ff"/><rect x="7" y="6" width="2" height="1" fill="#ffffff"/><rect x="9" y="6" width="1" height="1" fill="#0000ff"/><rect x="10" y="6" width="1" height="1" fill="#ffffff"/><rect x="11" y="6" width="1" height="1" fill="#0000ff"/><rect x="12" y="6" width="2" height="1" fill="#ffffff"/><rect x="14" y="6" width="1" height="1" fill="#000000"/><rect x="0" y="7" width="1" height="1" fill="#000000"/><rect x="1" y="7" width="1" height="1" fill="#0000ff"/><rect x="2" y="7" width="2" height="1" fill="#ffffff"/><rect x="4" y="7" width="1" height="1" fill="#0000ff"/><rect x="5" y="7" width="1" height="1" fill="#ffffff"/><rect x="6" y="7" width="1" height="1" fill="#0000ff"/><rect x="7" y="7" width="1" height="1" fill="#ffffff"/><rect x="8" y="7" width="2" height="1" fill="#0000ff"/><rect x="10" y="7" width="1" height="1" fill="#ffffff"/><rect x="11" y="7" width="1" height="1" fill="#0000ff"/><rect x="12" y="7" width="2" height="1" fill="#ffffff"/><rect x="14" y="7" width="1" height="1" fill="#000000"/><rect x="0" y="8" width="1" height="1" fill="#000000"/><rect x="1" y="8" width="1" height="1" fill="#ffffff"/><rect x="2" y="8" width="2" height="1" fill="#0000ff"/><rect x="4" y="8" width="3" height="1" fill="#ffffff"/><rect x="7" y="8" width="2" height="1" fill="#0000ff"/><rect x="9" y="8" width="2" height="1" fill="#ffffff"/><rect x="11" y="8" width="3" height="1" fill="#0000ff"/><rect x="14" y="8" width="1" height="1" fill="#000000"/><rect x="0" y="9" width="1" height="1" fill="#000000"/><rect x="1" y="9" width="8" height="1" fill="#ffffff"/><rect x="9" y="9" width="1" height="1" fill="#0000ff"/><rect x="10" y="9" width="4" height="1" fill="#ffffff"/><rect x="14" y="9" width="1" height="1" fill="#000000"/><rect x="0" y="10" width="15" height="1" fill="#000000"/></svg>
<div class="t" style="left:96px;top:146px;">SQL\[sybase] [dbo] v</div>
<svg class="a" style="left:66px;top:168px" width="11" height="1" shape-rendering="crispEdges"><rect x="0" y="0" width="1" height="1" fill="#808080"/><rect x="2" y="0" width="1" height="1" fill="#808080"/><rect x="4" y="0" width="1" height="1" fill="#808080"/><rect x="6" y="0" width="1" height="1" fill="#808080"/><rect x="8" y="0" width="1" height="1" fill="#808080"/><rect x="10" y="0" width="1" height="1" fill="#808080"/></svg>
<svg class="a" style="left:78px;top:163px" width="15" height="11" shape-rendering="crispEdges"><rect x="0" y="0" width="15" height="1" fill="#000000"/><rect x="0" y="1" width="1" height="1" fill="#000000"/><rect x="1" y="1" width="13" height="1" fill="#ffffff"/><rect x="14" y="1" width="1" height="1" fill="#000000"/><rect x="0" y="2" width="1" height="1" fill="#000000"/><rect x="1" y="2" width="1" height="1" fill="#ffffff"/><rect x="2" y="2" width="2" height="1" fill="#0000ff"/><rect x="4" y="2" width="3" height="1" fill="#ffffff"/><rect x="7" y="2" width="2" height="1" fill="#0000ff"/><rect x="9" y="2" width="2" height="1" fill="#ffffff"/><rect x="11" y="2" width="1" height="1" fill="#0000ff"/><rect x="12" y="2" width="2" height="1" fill="#ffffff"/><rect x="14" y="2" width="1" height="1" fill="#000000"/><rect x="0" y="3" width="1" height="1" fill="#000000"/><rect x="1" y="3" width="1" height="1" fill="#0000ff"/><rect x="2" y="3" width="2" height="1" fill="#ffffff"/><rect x="4" y="3" width="1" height="1" fill="#0000ff"/><rect x="5" y="3" width="1" height="1" fill="#ffffff"/><rect x="6" y="3" width="1" height="1" fill="#0000ff"/><rect x="7" y="3" width="2" height="1" fill="#ffffff"/><rect x="9" y="3" width="1" height="1" fill="#0000ff"/><rect x="10" y="3" width="1" height="1" fill="#ffffff"/><rect x="11" y="3" width="1" height="1" fill="#0000ff"/><rect x="12" y="3" width="2" height="1" fill="#ffffff"/><rect x="14" y="3" width="1" height="1" fill="#000000"/><rect x="0" y="4" width="1" height="1" fill="#000000"/><rect x="1" y="4" width="1" height="1" fill="#0000ff"/><rect x="2" y="4" width="4" height="1" fill="#ffffff"/><rect x="6" y="4" width="1" height="1" fill="#0000ff"/><rect x="7" y="4" width="2" height="1" fill="#ffffff"/><rect x="9" y="4" width="1" height="1" fill="#0000ff"/><rect x="10" y="4" width="1" height="1" fill="#ffffff"/><rect x="11" y="4" width="1" height="1" fill="#0000ff"/><rect x="12" y="4" width="2" height="1" fill="#ffffff"/><rect x="14" y="4" width="1" height="1" fill="#000000"/><rect x="0" y="5" width="1" height="1" fill="#000000"/><rect x="1" y="5" width="1" height="1" fill="#ffffff"/><rect x="2" y="5" width="2" height="1" fill="#0000ff"/><rect x="4" y="5" width="2" height="1" fill="#ffffff"/><rect x="6" y="5" width="1" height="1" fill="#0000ff"/><rect x="7" y="5" width="2" height="1" fill="#ffffff"/><rect x="9" y="5" width="1" height="1" fill="#0000ff"/><rect x="10" y="5" width="1" height="1" fill="#ffffff"/><rect x="11" y="5" width="1" height="1" fill="#0000ff"/><rect x="12" y="5" width="2" height="1" fill="#ffffff"/><rect x="14" y="5" width="1" height="1" fill="#000000"/><rect x="0" y="6" width="1" height="1" fill="#000000"/><rect x="1" y="6" width="3" height="1" fill="#ffffff"/><rect x="4" y="6" width="1" height="1" fill="#0000ff"/><rect x="5" y="6" width="1" height="1" fill="#ffffff"/><rect x="6" y="6" width="1" height="1" fill="#0000ff"/><rect x="7" y="6" width="2" height="1" fill="#ffffff"/><rect x="9" y="6" width="1" height="1" fill="#0000ff"/><rect x="10" y="6" width="1" height="1" fill="#ffffff"/><rect x="11" y="6" width="1" height="1" fill="#0000ff"/><rect x="12" y="6" width="2" height="1" fill="#ffffff"/><rect x="14" y="6" width="1" height="1" fill="#000000"/><rect x="0" y="7" width="1" height="1" fill="#000000"/><rect x="1" y="7" width="1" height="1" fill="#0000ff"/><rect x="2" y="7" width="2" height="1" fill="#ffffff"/><rect x="4" y="7" width="1" height="1" fill="#0000ff"/><rect x="5" y="7" width="1" height="1" fill="#ffffff"/><rect x="6" y="7" width="1" height="1" fill="#0000ff"/><rect x="7" y="7" width="1" height="1" fill="#ffffff"/><rect x="8" y="7" width="2" height="1" fill="#0000ff"/><rect x="10" y="7" width="1" height="1" fill="#ffffff"/><rect x="11" y="7" width="1" height="1" fill="#0000ff"/><rect x="12" y="7" width="2" height="1" fill="#ffffff"/><rect x="14" y="7" width="1" height="1" fill="#000000"/><rect x="0" y="8" width="1" height="1" fill="#000000"/><rect x="1" y="8" width="1" height="1" fill="#ffffff"/><rect x="2" y="8" width="2" height="1" fill="#0000ff"/><rect x="4" y="8" width="3" height="1" fill="#ffffff"/><rect x="7" y="8" width="2" height="1" fill="#0000ff"/><rect x="9" y="8" width="2" height="1" fill="#ffffff"/><rect x="11" y="8" width="3" height="1" fill="#0000ff"/><rect x="14" y="8" width="1" height="1" fill="#000000"/><rect x="0" y="9" width="1" height="1" fill="#000000"/><rect x="1" y="9" width="8" height="1" fill="#ffffff"/><rect x="9" y="9" width="1" height="1" fill="#0000ff"/><rect x="10" y="9" width="4" height="1" fill="#ffffff"/><rect x="14" y="9" width="1" height="1" fill="#000000"/><rect x="0" y="10" width="15" height="1" fill="#000000"/></svg>
<div class="t" style="left:96px;top:162px;">SQL\[sybase] [dbo] v</div>
<svg class="a" style="left:66px;top:184px" width="11" height="1" shape-rendering="crispEdges"><rect x="0" y="0" width="1" height="1" fill="#808080"/><rect x="2" y="0" width="1" height="1" fill="#808080"/><rect x="4" y="0" width="1" height="1" fill="#808080"/><rect x="6" y="0" width="1" height="1" fill="#808080"/><rect x="8" y="0" width="1" height="1" fill="#808080"/><rect x="10" y="0" width="1" height="1" fill="#808080"/></svg>
<svg class="a" style="left:78px;top:179px" width="15" height="11" shape-rendering="crispEdges"><rect x="0" y="0" width="15" height="1" fill="#000000"/><rect x="0" y="1" width="1" height="1" fill="#000000"/><rect x="1" y="1" width="13" height="1" fill="#ffffff"/><rect x="14" y="1" width="1" height="1" fill="#000000"/><rect x="0" y="2" width="1" height="1" fill="#000000"/><rect x="1" y="2" width="1" height="1" fill="#ffffff"/><rect x="2" y="2" width="2" height="1" fill="#0000ff"/><rect x="4" y="2" width="3" height="1" fill="#ffffff"/><rect x="7" y="2" width="2" height="1" fill="#0000ff"/><rect x="9" y="2" width="2" height="1" fill="#ffffff"/><rect x="11" y="2" width="1" height="1" fill="#0000ff"/><rect x="12" y="2" width="2" height="1" fill="#ffffff"/><rect x="14" y="2" width="1" height="1" fill="#000000"/><rect x="0" y="3" width="1" height="1" fill="#000000"/><rect x="1" y="3" width="1" height="1" fill="#0000ff"/><rect x="2" y="3" width="2" height="1" fill="#ffffff"/><rect x="4" y="3" width="1" height="1" fill="#0000ff"/><rect x="5" y="3" width="1" height="1" fill="#ffffff"/><rect x="6" y="3" width="1" height="1" fill="#0000ff"/><rect x="7" y="3" width="2" height="1" fill="#ffffff"/><rect x="9" y="3" width="1" height="1" fill="#0000ff"/><rect x="10" y="3" width="1" height="1" fill="#ffffff"/><rect x="11" y="3" width="1" height="1" fill="#0000ff"/><rect x="12" y="3" width="2" height="1" fill="#ffffff"/><rect x="14" y="3" width="1" height="1" fill="#000000"/><rect x="0" y="4" width="1" height="1" fill="#000000"/><rect x="1" y="4" width="1" height="1" fill="#0000ff"/><rect x="2" y="4" width="4" height="1" fill="#ffffff"/><rect x="6" y="4" width="1" height="1" fill="#0000ff"/><rect x="7" y="4" width="2" height="1" fill="#ffffff"/><rect x="9" y="4" width="1" height="1" fill="#0000ff"/><rect x="10" y="4" width="1" height="1" fill="#ffffff"/><rect x="11" y="4" width="1" height="1" fill="#0000ff"/><rect x="12" y="4" width="2" height="1" fill="#ffffff"/><rect x="14" y="4" width="1" height="1" fill="#000000"/><rect x="0" y="5" width="1" height="1" fill="#000000"/><rect x="1" y="5" width="1" height="1" fill="#ffffff"/><rect x="2" y="5" width="2" height="1" fill="#0000ff"/><rect x="4" y="5" width="2" height="1" fill="#ffffff"/><rect x="6" y="5" width="1" height="1" fill="#0000ff"/><rect x="7" y="5" width="2" height="1" fill="#ffffff"/><rect x="9" y="5" width="1" height="1" fill="#0000ff"/><rect x="10" y="5" width="1" height="1" fill="#ffffff"/><rect x="11" y="5" width="1" height="1" fill="#0000ff"/><rect x="12" y="5" width="2" height="1" fill="#ffffff"/><rect x="14" y="5" width="1" height="1" fill="#000000"/><rect x="0" y="6" width="1" height="1" fill="#000000"/><rect x="1" y="6" width="3" height="1" fill="#ffffff"/><rect x="4" y="6" width="1" height="1" fill="#0000ff"/><rect x="5" y="6" width="1" height="1" fill="#ffffff"/><rect x="6" y="6" width="1" height="1" fill="#0000ff"/><rect x="7" y="6" width="2" height="1" fill="#ffffff"/><rect x="9" y="6" width="1" height="1" fill="#0000ff"/><rect x="10" y="6" width="1" height="1" fill="#ffffff"/><rect x="11" y="6" width="1" height="1" fill="#0000ff"/><rect x="12" y="6" width="2" height="1" fill="#ffffff"/><rect x="14" y="6" width="1" height="1" fill="#000000"/><rect x="0" y="7" width="1" height="1" fill="#000000"/><rect x="1" y="7" width="1" height="1" fill="#0000ff"/><rect x="2" y="7" width="2" height="1" fill="#ffffff"/><rect x="4" y="7" width="1" height="1" fill="#0000ff"/><rect x="5" y="7" width="1" height="1" fill="#ffffff"/><rect x="6" y="7" width="1" height="1" fill="#0000ff"/><rect x="7" y="7" width="1" height="1" fill="#ffffff"/><rect x="8" y="7" width="2" height="1" fill="#0000ff"/><rect x="10" y="7" width="1" height="1" fill="#ffffff"/><rect x="11" y="7" width="1" height="1" fill="#0000ff"/><rect x="12" y="7" width="2" height="1" fill="#ffffff"/><rect x="14" y="7" width="1" height="1" fill="#000000"/><rect x="0" y="8" width="1" height="1" fill="#000000"/><rect x="1" y="8" width="1" height="1" fill="#ffffff"/><rect x="2" y="8" width="2" height="1" fill="#0000ff"/><rect x="4" y="8" width="3" height="1" fill="#ffffff"/><rect x="7" y="8" width="2" height="1" fill="#0000ff"/><rect x="9" y="8" width="2" height="1" fill="#ffffff"/><rect x="11" y="8" width="3" height="1" fill="#0000ff"/><rect x="14" y="8" width="1" height="1" fill="#000000"/><rect x="0" y="9" width="1" height="1" fill="#000000"/><rect x="1" y="9" width="8" height="1" fill="#ffffff"/><rect x="9" y="9" width="1" height="1" fill="#0000ff"/><rect x="10" y="9" width="4" height="1" fill="#ffffff"/><rect x="14" y="9" width="1" height="1" fill="#000000"/><rect x="0" y="10" width="15" height="1" fill="#000000"/></svg>
<div class="t" style="left:96px;top:178px;">SQL\[sybase] [dbo] v</div>
<svg class="a" style="left:27px;top:16px" width="1" height="4" shape-rendering="crispEdges"><rect x="0" y="0" width="1" height="1" fill="#808080"/><rect x="0" y="2" width="1" height="1" fill="#808080"/></svg>
<svg class="a" style="left:46px;top:32px" width="1" height="4" shape-rendering="crispEdges"><rect x="0" y="0" width="1" height="1" fill="#808080"/><rect x="0" y="2" width="1" height="1" fill="#808080"/></svg>
<svg class="a" style="left:46px;top:45px" width="1" height="23" shape-rendering="crispEdges"><rect x="0" y="0" width="1" height="1" fill="#808080"/><rect x="0" y="2" width="1" height="1" fill="#808080"/><rect x="0" y="4" width="1" height="1" fill="#808080"/><rect x="0" y="6" width="1" height="1" fill="#808080"/><rect x="0" y="8" width="1" height="1" fill="#808080"/><rect x="0" y="10" width="1" height="1" fill="#808080"/><rect x="0" y="12" width="1" height="1" fill="#808080"/><rect x="0" y="14" width="1" height="1" fill="#808080"/><rect x="0" y="16" width="1" height="1" fill="#808080"/><rect x="0" y="18" width="1" height="1" fill="#808080"/><rect x="0" y="20" width="1" height="1" fill="#808080"/><rect x="0" y="22" width="1" height="1" fill="#808080"/></svg>
<svg class="a" style="left:65px;top:48px" width="1" height="9" shape-rendering="crispEdges"><rect x="0" y="0" width="1" height="1" fill="#808080"/><rect x="0" y="2" width="1" height="1" fill="#808080"/><rect x="0" y="4" width="1" height="1" fill="#808080"/><rect x="0" y="6" width="1" height="1" fill="#808080"/><rect x="0" y="8" width="1" height="1" fill="#808080"/></svg>
<svg class="a" style="left:65px;top:80px" width="1" height="105" shape-rendering="crispEdges"><rect x="0" y="0" width="1" height="1" fill="#808080"/><rect x="0" y="2" width="1" height="1" fill="#808080"/><rect x="0" y="4" width="1" height="1" fill="#808080"/><rect x="0" y="6" width="1" height="1" fill="#808080"/><rect x="0" y="8" width="1" height="1" fill="#808080"/><rect x="0" y="10" width="1" height="1" fill="#808080"/><rect x="0" y="12" width="1" height="1" fill="#808080"/><rect x="0" y="14" width="1" height="1" fill="#808080"/><rect x="0" y="16" width="1" height="1" fill="#808080"/><rect x="0" y="18" width="1" height="1" fill="#808080"/><rect x="0" y="20" width="1" height="1" fill="#808080"/><rect x="0" y="22" width="1" height="1" fill="#808080"/><rect x="0" y="24" width="1" height="1" fill="#808080"/><rect x="0" y="26" width="1" height="1" fill="#808080"/><rect x="0" y="28" width="1" height="1" fill="#808080"/><rect x="0" y="30" width="1" height="1" fill="#808080"/><rect x="0" y="32" width="1" height="1" fill="#808080"/><rect x="0" y="34" width="1" height="1" fill="#808080"/><rect x="0" y="36" width="1" height="1" fill="#808080"/><rect x="0" y="38" width="1" height="1" fill="#808080"/><rect x="0" y="40" width="1" height="1" fill="#808080"/><rect x="0" y="42" width="1" height="1" fill="#808080"/><rect x="0" y="44" width="1" height="1" fill="#808080"/><rect x="0" y="46" width="1" height="1" fill="#808080"/><rect x="0" y="48" width="1" height="1" fill="#808080"/><rect x="0" y="50" width="1" height="1" fill="#808080"/><rect x="0" y="52" width="1" height="1" fill="#808080"/><rect x="0" y="54" width="1" height="1" fill="#808080"/><rect x="0" y="56" width="1" height="1" fill="#808080"/><rect x="0" y="58" width="1" height="1" fill="#808080"/><rect x="0" y="60" width="1" height="1" fill="#808080"/><rect x="0" y="62" width="1" height="1" fill="#808080"/><rect x="0" y="64" width="1" height="1" fill="#808080"/><rect x="0" y="66" width="1" height="1" fill="#808080"/><rect x="0" y="68" width="1" height="1" fill="#808080"/><rect x="0" y="70" width="1" height="1" fill="#808080"/><rect x="0" y="72" width="1" height="1" fill="#808080"/><rect x="0" y="74" width="1" height="1" fill="#808080"/><rect x="0" y="76" width="1" height="1" fill="#808080"/><rect x="0" y="78" width="1" height="1" fill="#808080"/><rect x="0" y="80" width="1" height="1" fill="#808080"/><rect x="0" y="82" width="1" height="1" fill="#808080"/><rect x="0" y="84" width="1" height="1" fill="#808080"/><rect x="0" y="86" width="1" height="1" fill="#808080"/><rect x="0" y="88" width="1" height="1" fill="#808080"/><rect x="0" y="90" width="1" height="1" fill="#808080"/><rect x="0" y="92" width="1" height="1" fill="#808080"/><rect x="0" y="94" width="1" height="1" fill="#808080"/><rect x="0" y="96" width="1" height="1" fill="#808080"/><rect x="0" y="98" width="1" height="1" fill="#808080"/><rect x="0" y="100" width="1" height="1" fill="#808080"/><rect x="0" y="102" width="1" height="1" fill="#808080"/><rect x="0" y="104" width="1" height="1" fill="#808080"/></svg>
</div>
<div class="a dither" style="left:6px;top:528px;width:199px;height:16px;"></div>
<div class="a raised" style="left:6px;top:528px;width:16px;height:16px;"></div>
<div class="a raised" style="left:22px;top:528px;width:77px;height:16px;"></div>
<div class="a raised" style="left:189px;top:528px;width:16px;height:16px;"></div>
<div class="a sunk" style="left:209px;top:49px;width:588px;height:496px;"></div>
<div class="a " style="left:795px;top:51px;width:1px;height:493px;background:#fff"></div>
<div class="a raised" style="left:213px;top:52px;width:60px;height:21px;"></div>
<div class="t" style="left:219px;top:55px;;letter-spacing:-0.240px">Properties</div>
<div class="a dither" style="left:275px;top:52px;width:58px;height:21px;box-shadow:inset -1px -1px #fff,inset 1px 1px #404040,inset -2px -2px #d4d0c8,inset 2px 2px #808080"></div>
<div class="t" style="left:282px;top:56px;;letter-spacing:-0.242px">Prognosis</div>
<div class="a raised" style="left:335px;top:52px;width:110px;height:21px;"></div>
<div class="t" style="left:342px;top:55px;;letter-spacing:-0.158px">Database Properties</div>
<div class="a raised" style="left:447px;top:52px;width:130px;height:21px;"></div>
<div class="t" style="left:453px;top:55px;;letter-spacing:-0.279px">Configuration Parameters</div>
<div class="a raised" style="left:580px;top:52px;width:114px;height:21px;"></div>
<div class="t" style="left:585px;top:55px;;letter-spacing:-0.002px">Apply/Undo Changes</div>
<div class="a " style="left:215px;top:79px;width:576px;height:1px;background:#808080"></div><div class="a " style="left:215px;top:79px;width:1px;height:263px;background:#808080"></div><div class="a " style="left:216px;top:80px;width:574px;height:1px;background:#fff"></div><div class="a " style="left:216px;top:80px;width:1px;height:261px;background:#fff"></div><div class="a " style="left:215px;top:341px;width:576px;height:1px;background:#fff"></div><div class="a " style="left:790px;top:79px;width:1px;height:263px;background:#fff"></div>
<div class="a " style="left:789px;top:81px;width:1px;height:239px;background:#404040"></div>
<div class="a " style="left:217px;top:319px;width:573px;height:1px;background:#404040"></div>
<div class="a sunk" style="left:220px;top:84px;width:566px;height:234px;"></div>
<div class="a " style="left:222px;top:86px;width:563px;height:214px;background:#d4d0c8;box-shadow:inset 1px 1px #fff,inset 0 -1px #808080"></div>
<div class="a " style="left:491px;top:87px;width:1px;height:212px;background:#808080"></div>
<div class="a " style="left:492px;top:87px;width:1px;height:212px;background:#fff"></div>
<div class="a " style="left:741px;top:87px;width:1px;height:212px;background:#808080"></div>
<div class="a " style="left:742px;top:87px;width:1px;height:212px;background:#fff"></div>
<div class="t" style="left:333px;top:96px;;letter-spacing:0.007px">Total Cost</div>
<div class="a " style="left:284px;top:116px;width:201px;height:110px;border:1px solid #000;border-left-width:2px;border-bottom-width:2px"></div>
<div class="t" style="left:233px;top:131px;;letter-spacing:0.357px;font-size:12px;line-height:14px">600,000</div>
<div class="t" style="left:233px;top:161px;;letter-spacing:0.357px;font-size:12px;line-height:14px">400,000</div>
<div class="t" style="left:233px;top:190px;;letter-spacing:0.357px;font-size:12px;line-height:14px">200,000</div>
<div class="t" style="left:271px;top:219px;;font-size:12px;line-height:14px">0</div>
<div class="a " style="left:308px;top:143px;width:48px;height:82px;background:#ff00ff;border:1px solid #000;border-bottom:0"></div>
<div class="a " style="left:415px;top:139px;width:48px;height:86px;background:#0028ff;border:1px solid #000;border-bottom:0"></div>
<svg class="a" style="left:0;top:0" width="799" height="569"><path d="M281 225.5h3M282 218.2h2M282 210.8h2M282 203.5h2M281 196.2h3M282 188.8h2M282 181.5h2M282 174.2h2M281 166.9h3M282 159.5h2M282 152.2h2M282 144.9h2M281 137.5h3M282 130.2h2M282 122.9h2M304.5 226v3M331.5 226v4M358.5 226v3M385.5 226v4M411.5 226v3M438.5 226v4M465.5 226v3" stroke="#000" stroke-width="1" fill="none"/></svg>
<svg class="a" style="left:0;top:0" width="799" height="569"><path d="M331.5 140.5L331.5 142.5" stroke="#fff" stroke-width="1"/></svg><div class="a " style="left:302px;top:122px;width:58px;height:18px;background:#ffffe1;border:1px solid #000;box-shadow:1px 1px 0 #808080"></div><div class="t" style="left:309px;top:125px;;letter-spacing:0.373px;font-size:12px;line-height:14px">563,392</div>
<svg class="a" style="left:0;top:0" width="799" height="569"><path d="M438.5 136.5L438.5 138.5" stroke="#fff" stroke-width="1"/></svg><div class="a " style="left:409px;top:118px;width:58px;height:18px;background:#ffffe1;border:1px solid #000;box-shadow:1px 1px 0 #808080"></div><div class="t" style="left:416px;top:121px;;letter-spacing:0.357px;font-size:12px;line-height:14px">588,184</div>
<div class="t" style="left:306px;top:234px;;letter-spacing:0.567px;font-size:12px;line-height:14px">Baseline</div>
<div class="a" style="left:222px;top:230px;width:268px;height:20px;overflow:hidden"><div class="t" style="left:153px;top:4px;;font-size:12px;line-height:14px">Upgrade to new server</div></div>
<div class="a " style="left:264px;top:255px;width:186px;height:34px;background:#fff;border:1px solid #000"></div>
<div class="t" style="left:273px;top:257px;;letter-spacing:0.285px;font-size:12px;line-height:14px">563,392 Baseline</div>
<div class="t" style="left:273px;top:273px;;letter-spacing:0.212px;font-size:12px;line-height:14px">588,184 Upgrade to new server</div>
<div class="t" style="left:564px;top:96px;;letter-spacing:-0.135px">SQL with Cost Change</div>
<svg class="a" style="left:560px;top:136px" width="116" height="92"><ellipse cx="57" cy="46" rx="54.5" ry="43" fill="#ffff00" stroke="#000"/><path d="M57 46H111.5A54.5 43 0 1 0 8.5 64.5Z" fill="#ff0000" stroke="#000"/></svg>
<svg class="a" style="left:0;top:0" width="799" height="569"><path d="M604.5 136.5L608.5 139.5" stroke="#fff" stroke-width="1"/></svg><div class="a " style="left:546px;top:117px;width:58px;height:18px;background:#ffffe1;border:1px solid #000;box-shadow:1px 1px 0 #808080"></div><div class="t" style="left:553px;top:120px;;letter-spacing:0.281px;font-size:12px;line-height:14px">57.14 %</div>
<svg class="a" style="left:0;top:0" width="799" height="569"><path d="M564.5 201.5L567.5 198.5" stroke="#fff" stroke-width="1"/></svg><div class="a " style="left:530px;top:203px;width:34px;height:17px;background:#ffffe1;border:1px solid #000;box-shadow:1px 1px 0 #808080"></div><div class="t" style="left:536px;top:206px;;font-size:12px;line-height:14px">0 %</div>
<svg class="a" style="left:0;top:0" width="799" height="569"><path d="M627.5 225.5L630.5 229.5" stroke="#fff" stroke-width="1"/></svg><div class="a " style="left:630px;top:229px;width:58px;height:17px;background:#ffffe1;border:1px solid #000;box-shadow:1px 1px 0 #808080"></div><div class="t" style="left:637px;top:232px;;letter-spacing:0.331px;font-size:12px;line-height:14px">42.86 %</div>
<div class="a " style="left:517px;top:255px;width:200px;height:34px;background:#fff;border:1px solid #000"></div>
<div class="a " style="left:523px;top:259px;width:16px;height:12px;background:#ff0000;border:1px solid #000"></div>
<div class="t" style="left:542px;top:258px;;letter-spacing:0.366px;font-size:12px;line-height:14px">4 Degraded</div>
<div class="a " style="left:620px;top:259px;width:16px;height:12px;background:#008000;border:1px solid #000"></div>
<div class="t" style="left:639px;top:258px;;letter-spacing:0.287px;font-size:12px;line-height:14px">0 Improved</div>
<div class="a " style="left:523px;top:274px;width:16px;height:12px;background:#ffff00;border:1px solid #000"></div>
<div class="t" style="left:542px;top:274px;;letter-spacing:0.333px;font-size:12px;line-height:14px">3 Unchanged</div>
<div class="a" style="left:742px;top:86px;width:42px;height:214px;overflow:hidden"><div class="a " style="left:25px;top:184px;width:34px;height:19px;background:#fff;border:1px solid #000"></div><div class="a " style="left:32px;top:188px;width:13px;height:12px;background:#ff0000;border:1px solid #000"></div></div>
<div class="a dither" style="left:222px;top:300px;width:562px;height:16px;"></div>
<div class="a raised" style="left:222px;top:300px;width:16px;height:16px;"></div>
<div class="a raised" style="left:238px;top:300px;width:235px;height:16px;"></div>
<div class="a raised" style="left:768px;top:300px;width:16px;height:16px;"></div>
<div class="a " style="left:262px;top:320px;width:53px;height:18px;background:#d4d0c8"></div><div class="a " style="left:262px;top:320px;width:1px;height:16px;background:#fff"></div><div class="a " style="left:314px;top:320px;width:1px;height:16px;background:#404040"></div><div class="a " style="left:313px;top:320px;width:1px;height:17px;background:#808080"></div><div class="a " style="left:313px;top:336px;width:1px;height:1px;background:#404040"></div><div class="a " style="left:264px;top:337px;width:49px;height:1px;background:#404040"></div><div class="a " style="left:263px;top:336px;width:50px;height:1px;background:#808080"></div>
<div class="t" style="left:265px;top:322px;;letter-spacing:-0.344px">Summary</div>
<div class="a " style="left:217px;top:318px;width:45px;height:22px;background:#d4d0c8"></div><div class="a " style="left:217px;top:318px;width:1px;height:20px;background:#fff"></div><div class="a " style="left:218px;top:338px;width:1px;height:1px;background:#fff"></div><div class="a " style="left:261px;top:319px;width:1px;height:19px;background:#404040"></div><div class="a " style="left:260px;top:319px;width:1px;height:20px;background:#808080"></div><div class="a " style="left:260px;top:338px;width:1px;height:1px;background:#404040"></div><div class="a " style="left:219px;top:339px;width:41px;height:1px;background:#404040"></div><div class="a " style="left:218px;top:338px;width:42px;height:1px;background:#808080"></div>
<div class="t" style="left:223px;top:324px;;letter-spacing:0.023px">Chart</div>
<div class="a sunk" style="left:215px;top:343px;width:576px;height:95px;background:#fff"></div>
<div class="a" style="left:217px;top:345px;width:556px;height:75px;overflow:hidden">
<div class="a raised" style="left:0px;top:0px;width:20px;height:17px;"></div>
<div class="a raised" style="left:20px;top:0px;width:251px;height:17px;"><div class="t" style="left:5px;top:3px;">SQL</div></div>
<div class="a raised" style="left:271px;top:0px;width:60px;height:17px;"><div class="t" style="left:5px;top:3px;;letter-spacing:-0.142px">Baselin...</div></div>
<div class="a raised" style="left:331px;top:0px;width:60px;height:17px;"><div class="t" style="left:5px;top:3px;;letter-spacing:-0.056px">Scenari...</div></div>
<div class="a raised" style="left:391px;top:0px;width:60px;height:17px;"><div class="t" style="left:5px;top:3px;">Cost Dif...</div></div>
<div class="a raised" style="left:451px;top:0px;width:60px;height:17px;"><div class="t" style="left:5px;top:3px;">Plan Ch...</div></div>
<div class="a raised" style="left:511px;top:0px;width:63px;height:17px;"><div class="t" style="left:5px;top:3px;">Abstract</div></div>
<div class="a" style="left:20px;top:17px;width:250px;height:17px;overflow:hidden"><div class="t" style="left:6px;top:4px;color:#ff00ff">SQL\SQL1</div></div>
<div class="a" style="left:271px;top:17px;width:59px;height:17px;overflow:hidden"><div class="t" style="left:6px;top:4px;color:#ff00ff">1795</div></div>
<div class="a" style="left:331px;top:17px;width:59px;height:17px;overflow:hidden"><div class="t" style="left:6px;top:4px;color:#ff00ff">1795</div></div>
<div class="a" style="left:391px;top:17px;width:59px;height:17px;overflow:hidden"><div class="t" style="left:6px;top:4px;color:#ff00ff">0</div></div>
<div class="a" style="left:451px;top:17px;width:59px;height:17px;overflow:hidden"><div class="t" style="left:6px;top:4px;color:#ff00ff">No</div></div>
<div class="a" style="left:511px;top:17px;width:62px;height:17px;overflow:hidden"><div class="t" style="left:6px;top:4px;color:#ff00ff">N/A</div></div>
<svg class="a" style="left:5px;top:22px" width="11" height="9" shape-rendering="crispEdges"><rect x="10" y="0" width="1" height="1" fill="#000000"/><rect x="8" y="1" width="2" height="1" fill="#ff0000"/><rect x="10" y="1" width="1" height="1" fill="#000000"/><rect x="7" y="2" width="2" height="1" fill="#ff0000"/><rect x="9" y="2" width="1" height="1" fill="#000000"/><rect x="0" y="3" width="1" height="1" fill="#ff0000"/><rect x="6" y="3" width="2" height="1" fill="#ff0000"/><rect x="8" y="3" width="1" height="1" fill="#000000"/><rect x="0" y="4" width="2" height="1" fill="#ff0000"/><rect x="5" y="4" width="2" height="1" fill="#ff0000"/><rect x="7" y="4" width="1" height="1" fill="#000000"/><rect x="1" y="5" width="2" height="1" fill="#ff0000"/><rect x="4" y="5" width="2" height="1" fill="#ff0000"/><rect x="6" y="5" width="1" height="1" fill="#000000"/><rect x="2" y="6" width="3" height="1" fill="#ff0000"/><rect x="5" y="6" width="1" height="1" fill="#000000"/><rect x="3" y="7" width="1" height="1" fill="#ff0000"/><rect x="4" y="7" width="1" height="1" fill="#000000"/><rect x="3" y="8" width="1" height="1" fill="#000000"/></svg>
<div class="a" style="left:20px;top:36px;width:250px;height:17px;overflow:hidden"><div class="t" style="left:6px;top:2px;color:#000;letter-spacing:-0.143px">SQL\[sybase] [dbo] view-&gt;sybase.dbo.sysquery...</div></div>
<div class="a" style="left:271px;top:36px;width:59px;height:17px;overflow:hidden"><div class="t" style="left:6px;top:2px;color:#000">10267</div></div>
<div class="a" style="left:331px;top:36px;width:59px;height:17px;overflow:hidden"><div class="t" style="left:6px;top:2px;color:#000">12522</div></div>
<div class="a" style="left:391px;top:36px;width:59px;height:17px;overflow:hidden"><div class="t" style="left:6px;top:2px;color:#000">2255</div></div>
<div class="a" style="left:451px;top:36px;width:59px;height:17px;overflow:hidden"><div class="t" style="left:6px;top:2px;color:#000">Yes</div></div>
<div class="a" style="left:511px;top:36px;width:62px;height:17px;overflow:hidden"><div class="t" style="left:6px;top:2px;color:#000">N/A</div></div>
<div class="a " style="left:20px;top:53px;width:536px;height:16px;background:#0a246a"></div>
<div class="a" style="left:20px;top:53px;width:250px;height:17px;overflow:hidden"><div class="t" style="left:6px;top:2px;color:#fff;letter-spacing:-0.090px">SQL\[sybase] [dbo] view-&gt;sybase.dbo.V_DEPT...</div></div>
<div class="a" style="left:271px;top:53px;width:59px;height:17px;overflow:hidden"><div class="t" style="left:6px;top:2px;color:#fff">421357</div></div>
<div class="a" style="left:331px;top:53px;width:59px;height:17px;overflow:hidden"><div class="t" style="left:6px;top:2px;color:#fff">421357</div></div>
<div class="a" style="left:391px;top:53px;width:59px;height:17px;overflow:hidden"><div class="t" style="left:6px;top:2px;color:#fff">0</div></div>
<div class="a" style="left:451px;top:53px;width:59px;height:17px;overflow:hidden"><div class="t" style="left:6px;top:2px;color:#fff">No</div></div>
<div class="a" style="left:511px;top:53px;width:62px;height:17px;overflow:hidden"><div class="t" style="left:6px;top:2px;color:#fff">N/A</div></div>
<svg class="a" style="left:5px;top:56px" width="11" height="9" shape-rendering="crispEdges"><rect x="10" y="0" width="1" height="1" fill="#0a246a"/><rect x="9" y="1" width="2" height="1" fill="#0a246a"/><rect x="8" y="2" width="1" height="1" fill="#0a246a"/><rect x="9" y="2" width="1" height="1" fill="#ff0000"/><rect x="10" y="2" width="1" height="1" fill="#0a246a"/><rect x="0" y="3" width="1" height="1" fill="#0a246a"/><rect x="7" y="3" width="1" height="1" fill="#0a246a"/><rect x="8" y="3" width="1" height="1" fill="#ff0000"/><rect x="9" y="3" width="1" height="1" fill="#0a246a"/><rect x="0" y="4" width="2" height="1" fill="#0a246a"/><rect x="6" y="4" width="1" height="1" fill="#0a246a"/><rect x="7" y="4" width="1" height="1" fill="#ff0000"/><rect x="8" y="4" width="1" height="1" fill="#0a246a"/><rect x="1" y="5" width="2" height="1" fill="#0a246a"/><rect x="5" y="5" width="1" height="1" fill="#0a246a"/><rect x="6" y="5" width="1" height="1" fill="#ff0000"/><rect x="7" y="5" width="1" height="1" fill="#0a246a"/><rect x="2" y="6" width="3" height="1" fill="#0a246a"/><rect x="5" y="6" width="1" height="1" fill="#ff0000"/><rect x="6" y="6" width="1" height="1" fill="#0a246a"/><rect x="3" y="7" width="1" height="1" fill="#0a246a"/><rect x="4" y="7" width="1" height="1" fill="#ff0000"/><rect x="5" y="7" width="1" height="1" fill="#0a246a"/><rect x="3" y="8" width="1" height="1" fill="#0a246a"/></svg>
<div class="a" style="left:20px;top:70px;width:250px;height:17px;overflow:hidden"><div class="t" style="left:6px;top:2px;color:#000">SQL\[sybase] [dbo] view-&gt;sybase.dbo.V_EMP...</div></div>
<div class="a" style="left:271px;top:70px;width:59px;height:17px;overflow:hidden"><div class="t" style="left:6px;top:2px;color:#000">78693</div></div>
<div class="a" style="left:331px;top:70px;width:59px;height:17px;overflow:hidden"><div class="t" style="left:6px;top:2px;color:#000">74943</div></div>
<div class="a" style="left:391px;top:70px;width:59px;height:17px;overflow:hidden"><div class="t" style="left:6px;top:2px;color:#000">4100</div></div>
<div class="a" style="left:451px;top:70px;width:59px;height:17px;overflow:hidden"><div class="t" style="left:6px;top:2px;color:#000">No</div></div>
<div class="a" style="left:511px;top:70px;width:62px;height:17px;overflow:hidden"><div class="t" style="left:6px;top:2px;color:#000">N/A</div></div>
<div class="a " style="left:0px;top:35px;width:556px;height:1px;background:#d4d0c8"></div>
<div class="a " style="left:0px;top:52px;width:556px;height:1px;background:#d4d0c8"></div>
<div class="a " style="left:0px;top:69px;width:556px;height:1px;background:#d4d0c8"></div>
<div class="a " style="left:19px;top:17px;width:1px;height:59px;background:#d4d0c8"></div>
<div class="a " style="left:270px;top:17px;width:1px;height:59px;background:#d4d0c8"></div>
<div class="a " style="left:330px;top:17px;width:1px;height:59px;background:#d4d0c8"></div>
<div class="a " style="left:390px;top:17px;width:1px;height:59px;background:#d4d0c8"></div>
<div class="a " style="left:450px;top:17px;width:1px;height:59px;background:#d4d0c8"></div>
<div class="a " style="left:510px;top:17px;width:1px;height:59px;background:#d4d0c8"></div>
<div class="a " style="left:19px;top:53px;width:1px;height:16px;background:#0a246a"></div>
</div>
<div class="a dither" style="left:773px;top:345px;width:16px;height:76px;"></div>
<div class="a raised" style="left:773px;top:345px;width:16px;height:16px;"></div>
<div class="a raised" style="left:773px;top:361px;width:16px;height:16px;"></div>
<div class="a raised" style="left:773px;top:404px;width:16px;height:16px;"></div>
<div class="a dither" style="left:217px;top:420px;width:556px;height:16px;"></div>
<div class="a raised" style="left:217px;top:420px;width:16px;height:16px;"></div>
<div class="a raised" style="left:233px;top:420px;width:359px;height:16px;"></div>
<div class="a raised" style="left:757px;top:420px;width:16px;height:16px;"></div>
<div class="a " style="left:773px;top:420px;width:16px;height:16px;background:#d4d0c8"></div>
<div class="a " style="left:215px;top:441px;width:576px;height:1px;background:#808080"></div><div class="a " style="left:215px;top:441px;width:1px;height:98px;background:#808080"></div><div class="a " style="left:216px;top:442px;width:574px;height:1px;background:#fff"></div><div class="a " style="left:216px;top:442px;width:1px;height:96px;background:#fff"></div><div class="a " style="left:215px;top:538px;width:576px;height:1px;background:#fff"></div><div class="a " style="left:790px;top:441px;width:1px;height:98px;background:#fff"></div>
<div class="a " style="left:788px;top:443px;width:2px;height:75px;background:#404040"></div>
<div class="a " style="left:217px;top:517px;width:573px;height:1px;background:#404040"></div>
<div class="a sunk" style="left:220px;top:446px;width:566px;height:70px;"></div>
<div class="t" style="left:222px;top:450px;font-family:&quot;Liberation Mono&quot;,monospace;font-size:13px;line-height:16px;letter-spacing:0.17px"><b>SELECT</b></div>
<div class="t" style="left:278px;top:450px;font-family:&quot;Liberation Mono&quot;,monospace;font-size:13px;line-height:16px;letter-spacing:0.17px">DEPARTMENT<span style="color:#0000ff">.</span>DPT_ID<span style="color:#0000ff">,</span></div>
<div class="t" style="left:278px;top:467px;font-family:&quot;Liberation Mono&quot;,monospace;font-size:13px;line-height:16px;letter-spacing:0.17px">DEPARTMENT<span style="color:#0000ff">.</span>DPT_NAME<span style="color:#0000ff">,</span></div>
<div class="t" style="left:278px;top:484px;font-family:&quot;Liberation Mono&quot;,monospace;font-size:13px;line-height:16px;letter-spacing:0.17px">DEPARTMENT<span style="color:#0000ff">.</span>DPT_MANAGER<span style="color:#0000ff">,</span></div>
<div class="a dither" style="left:768px;top:448px;width:16px;height:50px;"></div>
<div class="a raised" style="left:768px;top:448px;width:16px;height:16px;"></div>
<div class="a raised" style="left:768px;top:464px;width:16px;height:8px;"></div>
<div class="a raised" style="left:768px;top:482px;width:16px;height:16px;"></div>
<div class="a dither" style="left:222px;top:498px;width:546px;height:16px;"></div>
<div class="a raised" style="left:222px;top:498px;width:16px;height:16px;"></div>
<div class="a raised" style="left:238px;top:498px;width:406px;height:16px;"></div>
<div class="a raised" style="left:752px;top:498px;width:16px;height:16px;"></div>
<div class="a " style="left:768px;top:498px;width:16px;height:16px;background:#d4d0c8"></div>
<div class="a " style="left:277px;top:518px;width:86px;height:18px;background:#d4d0c8"></div><div class="a " style="left:277px;top:518px;width:1px;height:16px;background:#fff"></div><div class="a " style="left:362px;top:518px;width:1px;height:16px;background:#404040"></div><div class="a " style="left:361px;top:518px;width:1px;height:17px;background:#808080"></div><div class="a " style="left:361px;top:534px;width:1px;height:1px;background:#404040"></div><div class="a " style="left:279px;top:535px;width:82px;height:1px;background:#404040"></div><div class="a " style="left:278px;top:534px;width:83px;height:1px;background:#808080"></div>
<div class="t" style="left:280px;top:520px;;letter-spacing:-0.125px">SQL Information</div>
<div class="a " style="left:216px;top:516px;width:61px;height:22px;background:#d4d0c8"></div><div class="a " style="left:216px;top:516px;width:1px;height:20px;background:#fff"></div><div class="a " style="left:217px;top:536px;width:1px;height:1px;background:#fff"></div><div class="a " style="left:276px;top:517px;width:1px;height:19px;background:#404040"></div><div class="a " style="left:275px;top:517px;width:1px;height:20px;background:#808080"></div><div class="a " style="left:275px;top:536px;width:1px;height:1px;background:#404040"></div><div class="a " style="left:218px;top:537px;width:57px;height:1px;background:#404040"></div><div class="a " style="left:217px;top:536px;width:58px;height:1px;background:#808080"></div>
<div class="t" style="left:224px;top:522px;;letter-spacing:0.275px">SQL Text</div>
<div class="a tsunk" style="left:5px;top:547px;width:200px;height:18px;"></div>
<div class="a tsunk" style="left:207px;top:547px;width:48px;height:18px;"></div>
<div class="t dis" style="left:220px;top:551px;;letter-spacing:0.391px">Num</div>
<div class="a tsunk" style="left:257px;top:547px;width:48px;height:18px;"></div>
<div class="t" style="left:267px;top:551px;;letter-spacing:0.094px">Insert</div>
<div class="a tsunk" style="left:307px;top:547px;width:48px;height:18px;"></div>
<div class="t dis" style="left:319px;top:551px;;letter-spacing:-0.062px">Caps</div>
<div class="a tsunk" style="left:357px;top:547px;width:48px;height:18px;"></div>
<div class="t dis" style="left:367px;top:551px;;letter-spacing:0.200px">Scroll</div>
<div class="a tsunk" style="left:406px;top:547px;width:48px;height:18px;"></div>
<div class="t dis" style="left:411px;top:551px;;letter-spacing:-0.085px">Modified</div>
<div class="a tsunk" style="left:457px;top:547px;width:64px;height:18px;"></div>
<div class="t" style="left:478px;top:551px;;letter-spacing:-0.109px">1 : 1</div>
<div class="a tsunk" style="left:522px;top:547px;width:50px;height:18px;"></div>
<div class="t" style="left:524px;top:551px;;letter-spacing:-0.094px">384 bytes</div>
<div class="a tsunk" style="left:573px;top:547px;width:224px;height:18px;"></div><svg class="a" style="left:0;top:0" width="799" height="569"><path d="M16 532v8l-4-4z M195 532v8l4-4z M232 304v8l-4-4z M774 304v8l4-4z M777 355h8l-4-4z M777 410h8l-4 4z M227 424v8l-4-4z M763 424v8l4-4z M772 458h8l-4-4z M772 488h8l-4 4z M232 502v8l-4-4z M758 502v8l4-4z" fill="#000"/></svg></body></html>
